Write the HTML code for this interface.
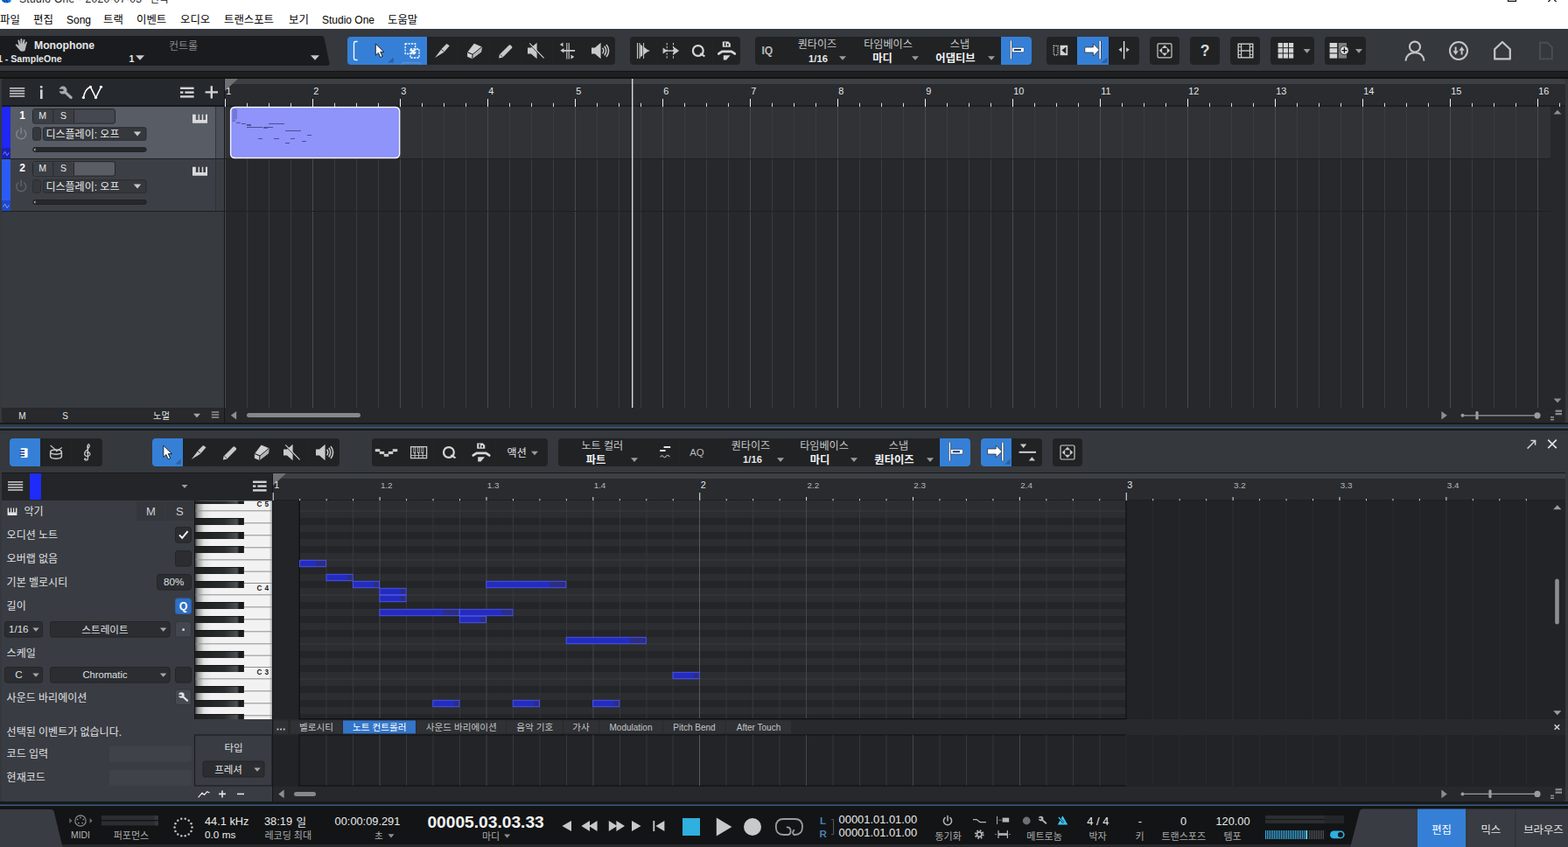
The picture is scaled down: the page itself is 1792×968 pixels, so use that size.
<!DOCTYPE html>
<html lang="ko"><head><meta charset="utf-8"><title>Studio One</title>
<style>
html,body{margin:0;padding:0;background:#1f2124;}
#app{position:relative;width:1792px;height:968px;overflow:hidden;background:#35383d;font-family:"Liberation Sans",sans-serif;}
#app>div{position:absolute;box-sizing:border-box;}
#app>span{position:absolute;white-space:nowrap;line-height:1;}
#ov{position:absolute;left:0;top:0;}
#ov text{font-family:"Liberation Sans","Noto Sans CJK KR",sans-serif;white-space:pre;}
.sr{position:absolute!important;width:1px;height:1px;overflow:hidden;clip:rect(0 0 0 0);clip-path:inset(50%);white-space:nowrap;font-size:1px;color:transparent;}
</style></head><body>
<div id="app">
<div style="left:0px;top:0px;width:1792px;height:33px;background:#ffffff;"></div>
<div style="left:0px;top:33px;width:1792px;height:48px;background:#35383d;"></div>
<div style="left:0px;top:81px;width:1792px;height:9px;background:#1d1f21;"></div>
<div style="left:0px;top:81px;width:1792px;height:1.2px;background:#131416;"></div>
<div style="left:0px;top:88.4px;width:1792px;height:1.2px;background:#121314;"></div>
<div style="left:2px;top:90px;width:1787px;height:393px;background:#26282b;border-radius:4px;"></div>
<div style="left:2px;top:90px;width:254px;height:31px;background:#25282c;border-radius:4px 0 0 0;"></div>
<div style="left:2px;top:121px;width:254px;height:345px;background:#373a3f;"></div>
<div style="left:257px;top:90px;width:1532px;height:6px;background:#3c3f44;border-radius:0 4px 0 0;"></div>
<div style="left:257px;top:96px;width:1532px;height:25px;background:#292b2f;"></div>
<div style="left:257px;top:120px;width:1532px;height:1.5px;background:#1d1f21;"></div>
<div style="left:2px;top:120px;width:254px;height:1.5px;background:#17191b;"></div>
<div style="left:257px;top:122px;width:1515px;height:59px;background:#303236;"></div>
<div style="left:257px;top:181px;width:1515px;height:1px;background:#1e2022;"></div>
<div style="left:257px;top:241px;width:1515px;height:1px;background:#1e2022;"></div>
<div style="left:256px;top:90px;width:1px;height:393px;background:#141617;"></div>
<div style="left:2px;top:466px;width:254px;height:17px;background:#27292c;border-radius:0 0 0 4px;"></div>
<div style="left:257px;top:466px;width:1532px;height:17px;background:#26282b;border-radius:0 0 4px 0;"></div>
<div style="left:12px;top:122px;width:235px;height:60px;background:#575c65;"></div>
<div style="left:247px;top:122px;width:9px;height:60px;background:#4b4f57;"></div>
<div style="left:246px;top:122px;width:1px;height:60px;background:#33363b;"></div>
<div style="left:2px;top:122px;width:10px;height:47px;background:#1f27f5;"></div>
<div style="left:2px;top:169px;width:10px;height:12px;background:#1a21b4;"></div>
<div style="left:2px;top:181px;width:254px;height:1px;background:#1d1f21;"></div>
<div style="left:12px;top:182px;width:235px;height:60px;background:#3c3f45;"></div>
<div style="left:247px;top:182px;width:9px;height:60px;background:#393c41;"></div>
<div style="left:246px;top:182px;width:1px;height:60px;background:#2d3034;"></div>
<div style="left:2px;top:182px;width:10px;height:47px;background:#2a5cf5;"></div>
<div style="left:2px;top:229px;width:10px;height:12px;background:#1d49c8;"></div>
<div style="left:2px;top:241px;width:254px;height:1px;background:#1d1f21;"></div>
<div style="left:0px;top:483px;width:1792px;height:2px;background:#17191b;"></div>
<div style="left:0px;top:488px;width:1792px;height:1.3px;background:#2f5f94;"></div>
<div style="left:0px;top:490.4px;width:1792px;height:1.6px;background:#17191b;"></div>
<div style="left:2px;top:493px;width:1787px;height:423px;background:#212326;border-radius:4px;"></div>
<div style="left:2px;top:493px;width:1787px;height:47px;background:#35383d;border-radius:4px 4px 0 0;"></div>
<div style="left:2px;top:540px;width:1787px;height:1.2px;background:#17191b;"></div>
<div style="left:2px;top:541px;width:309px;height:31px;background:#232528;"></div>
<div style="left:311px;top:541px;width:1px;height:375px;background:#141617;"></div>
<div style="left:312px;top:541px;width:1477px;height:6px;background:#3c3f44;"></div>
<div style="left:312px;top:547px;width:1477px;height:25px;background:#292b2f;"></div>
<div style="left:312px;top:571px;width:1477px;height:1.4px;background:#1d1f21;"></div>
<div style="left:33.8px;top:541px;width:13.4px;height:30px;background:#1f2bfb;"></div>
<div style="left:312px;top:572.4px;width:30.5px;height:249.6px;background:#222427;"></div>
<div style="left:342.5px;top:572.4px;width:943.9px;height:249.6px;background:#2b2d31;"></div>
<div style="left:312px;top:822px;width:1477px;height:18px;background:#27292c;"></div>
<div style="left:222px;top:822px;width:89px;height:94px;background:#393c42;"></div>
<div style="left:312px;top:899px;width:1477px;height:17px;background:#26282b;border-radius:0 0 4px 0;"></div>
<div style="left:2px;top:572px;width:220px;height:344px;background:#393c42;border-radius:0 0 0 4px;"></div>
<div style="left:0px;top:916px;width:1792px;height:3.4px;background:#17191b;"></div>
<div style="left:0px;top:919.6px;width:1792px;height:1.3px;background:#2f5f94;"></div>
<div style="left:0px;top:921px;width:1792px;height:47px;background:#131415;"></div>
<div style="left:0px;top:965.4px;width:1792px;height:2.6px;background:#26282b;"></div>
<svg id="ov" width="1792" height="968" viewBox="0 0 1792 968">
<path d="M2 0 h10.5 v1.2 q-1 2 -5 2.2 q-4 0 -5.5 -2.4z" fill="#1479e0"/>
<path d="M4.5 0 l1 2.6 M7.5 0 l1 2.6" fill="none" stroke="#0a2a5a" stroke-width="1"/>
<text x="171" y="3.3" font-size="12" fill="#222">편곡*</text>
<path d="M1723.5 0 v1.4 h9 v-1.4" fill="none" stroke="#111" stroke-width="1.1"/>
<path d="M1769.4 2 l2.2 -2 M1778.6 2 l-2.2 -2" fill="none" stroke="#111" stroke-width="1.2"/>
<text x="0" y="27" font-size="12.4" fill="#000">파일</text>
<text x="38" y="27" font-size="12.4" fill="#000">편집</text>
<text x="118" y="27" font-size="12.4" fill="#000">트랙</text>
<text x="156" y="27" font-size="12.4" fill="#000">이벤트</text>
<text x="206" y="27" font-size="12.4" fill="#000">오디오</text>
<text x="256" y="27" font-size="12.4" fill="#000">트랜스포트</text>
<text x="330" y="27" font-size="12.4" fill="#000">보기</text>
<text x="443" y="27" font-size="12.4" fill="#000">도움말</text>
<path d="M0 41 H367 q3 0 3.6 3 L376.5 72 q0.5 3 -2.5 3 H0z" fill="#191b1e"/>
<path d="M23 58 c-1.5 -2 -4 -5 -5 -6 c-0.8 -1 0.6 -2 1.6 -1.2 l2 1.8 l-1.2 -6 c-0.2 -1.3 1.4 -1.6 1.8 -0.4 l1.2 4.2 l0 -5.4 c0 -1.3 1.8 -1.3 1.9 0 l0.3 5.2 l1.1 -4.6 c0.3 -1.2 2 -0.8 1.8 0.4 l-0.8 5 l1.6 -2.8 c0.6 -1 2 -0.3 1.6 0.8 c-1 2.6 -1.6 5.4 -2.4 9 c-2 1 -4 1 -5.5 0z" fill="#b9babb"/>
<path d="M155 63.25 h10 l-5 5.5 z" fill="#c8c9ca"/>
<text x="193" y="57" font-size="12" fill="#84878b">컨트롤</text>
<path d="M355 63.25 h10 l-5 5.5 z" fill="#c8c9ca"/>
<rect x="397" y="42" width="306" height="32" fill="#202224" rx="4"/>
<path d="M401 42 H488 V74 H401 q-4 0 -4 -4 V46 q0 -4 4 -4z" fill="#3580d6"/>
<line x1="523.5" y1="42" x2="523.5" y2="74" stroke="#222426" stroke-width="1"/>
<line x1="559.5" y1="42" x2="559.5" y2="74" stroke="#222426" stroke-width="1"/>
<line x1="595.5" y1="42" x2="595.5" y2="74" stroke="#222426" stroke-width="1"/>
<line x1="631.5" y1="42" x2="631.5" y2="74" stroke="#222426" stroke-width="1"/>
<line x1="667.5" y1="42" x2="667.5" y2="74" stroke="#222426" stroke-width="1"/>
<path d="M408.5 47.5 h-2.3 q-1.7 0 -1.7 1.7 v17.6 q0 1.7 1.7 1.7 h2.3" fill="none" stroke="#fff" stroke-width="1.3"/>
<path d="M429.3 50 L429.3 63.2 L432.4 60.4 L434.8 65.6 L437.2 64.5 L434.8 59.4 L438.9 59.4z" fill="#fff" stroke="#111" stroke-width="0.9" stroke-linejoin="round"/>
<path d="M449.8 65.5 V71.6 H443.2z" fill="#2a5fa6"/>
<rect x="463.2" y="50" width="11.5" height="11.5" fill="none" stroke="#fff" stroke-width="1.3" stroke-dasharray="2.2 1.2"/>
<rect x="469" y="56" width="10" height="10" fill="none" stroke="#fff" stroke-width="1.3" stroke-dasharray="2.2 1.2"/>
<path d="M469.5 56.5 l5 5 m0 -5 l-5 5" fill="none" stroke="#fff" stroke-width="1.8"/>
<path d="M459.5 74 v-0.6 q0 -1.6 1.6 -1.6 h18 q1.6 0 1.6 1.6 v0.6" fill="#3f7fd0" stroke="#6d9fe0" stroke-width="0.8"/>
<path d="M497 66 L505 55.5 L510.5 50 L513.8 52.2 L507.3 59.8 z" fill="#c8c9ca"/>
<line x1="504.3" y1="56.4" x2="507.7" y2="59.2" stroke="#202224" stroke-width="0.9"/>
<path d="M541.9 50.2 L550.4 53.8 L549.8 59.2 L539.8 66.8 L534.4 64.6 L534.6 59.8z" fill="#d0d1d2" stroke="#d0d1d2" stroke-width="0.8" stroke-linejoin="round"/>
<path d="M534.6 59.8 L540.2 62.2 L539.8 66.8 M540.2 62.2 L550.4 53.8" fill="none" stroke="#202224" stroke-width="0.9"/>
<path d="M540.2 62.2 L550.4 53.8 L549.8 59.2 L539.8 66.8z" fill="#b4b5b6"/>
<path d="M534.6 59.8 L540.2 62.2 L539.8 66.8 M540.2 62.2 L550.4 53.8" fill="none" stroke="#202224" stroke-width="0.8"/>
<path d="M570 66.5 l1 -4.2 l10.6 -10.6 q1 -0.9 2 0 l1.4 1.4 q0.9 1 0 2 l-10.6 10.6 z" fill="#c8c9ca"/>
<line x1="571.6" y1="62.3" x2="574.6" y2="65.1" stroke="#202224" stroke-width="0.8"/>
<path d="M603 54.6 h4 l6.6 -5.8 v18.4 l-6.6 -5.8 h-4z" fill="#c8c9ca"/>
<line x1="605.2" y1="49.5" x2="621.5" y2="66.5" stroke="#c8c9ca" stroke-width="1.2"/>
<line x1="604.6" y1="50.2" x2="620.9" y2="67.2" stroke="#202224" stroke-width="0.8"/>
<line x1="647.8" y1="49" x2="647.8" y2="67.5" stroke="#c8c9ca" stroke-width="1.1"/>
<line x1="650.2" y1="49" x2="650.2" y2="67.5" stroke="#c8c9ca" stroke-width="1.1"/>

<path d="M643.5 48.6 l-3.6 2.3 l3.6 2.3z" fill="#c8c9ca"/>
<path d="M640.3 57.8 l4.2 -2.7 v1.9 h12.6 v1.7 h-12.6 v1.9z" fill="#c8c9ca"/>
<path d="M652.5 62.6 l3.8 2.4 l-3.8 2.4z" fill="#c8c9ca"/>
<path d="M676 54.6 h4 l6.6 -5.8 v18.4 l-6.6 -5.8 h-4z" fill="#c8c9ca"/>
<path d="M688.6 54.8 q2.4 3.2 0 6.4 M690.8 52.8 q3.8 5.2 0 10.4 M693 51 q5.2 7 0 14" fill="none" stroke="#c8c9ca" stroke-width="1.5"/>
<rect x="720" y="42" width="126" height="32" fill="#202224" rx="4"/>
<line x1="751.5" y1="42" x2="751.5" y2="74" stroke="#222426" stroke-width="1"/>
<line x1="783" y1="42" x2="783" y2="74" stroke="#222426" stroke-width="1"/>
<line x1="814.5" y1="42" x2="814.5" y2="74" stroke="#222426" stroke-width="1"/>
<line x1="728.5" y1="49" x2="728.5" y2="67" stroke="#c8c9ca" stroke-width="1.1"/>
<line x1="731" y1="49" x2="731" y2="67" stroke="#c8c9ca" stroke-width="1.1"/>
<path d="M731.6 50.6 L741.5 58 L731.6 65.4z" fill="#c8c9ca"/>
<line x1="734.8" y1="49" x2="734.8" y2="67" stroke="#202224" stroke-width="0.9"/>
<line x1="735.6" y1="49" x2="735.6" y2="67" stroke="#c8c9ca" stroke-width="1"/>
<path d="M735.2 58 h7" fill="none" stroke="#c8c9ca" stroke-width="1.2"/>
<line x1="762.2" y1="49" x2="762.2" y2="67" stroke="#c8c9ca" stroke-width="1" stroke-dasharray="2.4 1.4"/>
<line x1="769.5" y1="49" x2="769.5" y2="67" stroke="#c8c9ca" stroke-width="1" stroke-dasharray="2.4 1.4"/>
<path d="M757.6 54.6 l5 3.4 l-5 3.4z" fill="#c8c9ca"/>
<path d="M759 58 h12" fill="none" stroke="#c8c9ca" stroke-width="1.4"/>
<path d="M769.8 53.4 l6.4 4.6 l-6.4 4.6z" fill="#c8c9ca"/>
<circle cx="797.8" cy="58" r="5.9" fill="none" stroke="#d6d7d8" stroke-width="2.2"/>
<path d="M800.2 61.2 l5.2 3.2" fill="none" stroke="#d6d7d8" stroke-width="2"/>
<path d="M825.8 47.4 h6.6 l2.5 2.5 v3.8 h-9.1z" fill="#d6d7d8"/>
<rect x="827.9" y="48.5" width="1.5" height="4" fill="#202224"/>
<rect x="831" y="50" width="1.6" height="2.5" fill="#202224"/>
<path d="M821.4 61.4 L825.2 58.8 H836 L839.8 61.4" fill="none" stroke="#d6d7d8" stroke-width="2.8" stroke-linejoin="round" stroke-linecap="round"/>
<path d="M826.8 63.3 h7.8 l-4.5 5.2 h-3.3z" fill="#d6d7d8"/>
<rect x="863" y="42" width="316" height="32" fill="#202224" rx="4"/>
<text x="911.74" y="55.3" font-size="12.1" fill="#c6c7c9">퀀타이즈</text>
<path d="M959 64.2 h8 l-4 4.6 z" fill="#9a9c9f"/>
<text x="987.17" y="55.3" font-size="12.1" fill="#c6c7c9">타임베이스</text>
<text x="997.18" y="71.3" font-size="12.3" font-weight="bold" fill="#f4f4f5">마디</text>
<path d="M1042 64.2 h8 l-4 4.6 z" fill="#9a9c9f"/>
<text x="1085.87" y="55.3" font-size="12.1" fill="#c6c7c9">스냅</text>
<text x="1069.37" y="71.3" font-size="12.3" font-weight="bold" fill="#f4f4f5">어댑티브</text>
<path d="M1129 64.2 h8 l-4 4.6 z" fill="#9a9c9f"/>
<path d="M1144 42 h31 q4 0 4 4 v24 q0 4 -4 4 h-31z" fill="#3580d6"/>
<line x1="1155.4" y1="46.4" x2="1155.4" y2="67.4" stroke="#1d2f55" stroke-width="2.6"/>
<line x1="1155.4" y1="46.4" x2="1155.4" y2="67.4" stroke="#fff" stroke-width="1.5"/>
<rect x="1156.4" y="54.2" width="14" height="5.6" rx="1.2" fill="#fff" stroke="#1d2f55" stroke-width="0.6"/>
<rect x="1158.8" y="56" width="8.2" height="2" fill="#173a86"/>
<rect x="1196" y="42" width="106" height="32" fill="#202224" rx="4"/>
<rect x="1231" y="42" width="36" height="32" fill="#3580d6"/>
<rect x="1204.2" y="52.4" width="4.8" height="10.4" fill="none" stroke="#e0e1e2" stroke-width="1.2" stroke-dasharray="1.2 1.1"/>
<rect x="1211.6" y="51.8" width="8.6" height="11.4" fill="#d2d3d4"/>
<path d="M1218.4 53.6 v7.8 l-5 -3.9z" fill="#202224"/>
<path d="M1239.8 54 h9.6 v-4 l7 7 l-7 7 v-4 h-9.6z" fill="#fff" stroke="#1d1f21" stroke-width="0.7"/>
<line x1="1257.2" y1="46.8" x2="1257.2" y2="67.4" stroke="#1d1f21" stroke-width="2.8"/>
<line x1="1257.2" y1="46.8" x2="1257.2" y2="67.4" stroke="#fff" stroke-width="1.7"/>
<path d="M1265.4 65.4 v6.6 h-6.8z" fill="#2a5fa6"/>
<line x1="1284.6" y1="47" x2="1284.6" y2="67.4" stroke="#e6e7e8" stroke-width="1.4"/>
<path d="M1282 54.2 v5.2 l-3.6 -2.6z M1287.2 54.2 v5.2 l3.6 -2.6z" fill="#c8c9ca"/>
<rect x="1314" y="42" width="34" height="32" fill="#202224" rx="4"/>
<rect x="1323" y="49.8" width="16" height="16" rx="1.4" fill="none" stroke="#c8c9ca" stroke-width="1.2"/>
<path d="M1327.8 55 l3.2 -3.4 l3.2 3.4z M1327.8 60.6 l3.2 3.4 l3.2 -3.4z M1328.2 54.6 l-3.4 3.2 l3.4 3.2z M1333.8 54.6 l3.4 3.2 l-3.4 3.2z" fill="#c8c9ca"/>
<rect x="1360" y="42" width="34" height="32" fill="#202224" rx="4"/>
<rect x="1406" y="42" width="34" height="32" fill="#202224" rx="4"/>
<rect x="1415.2" y="50.2" width="16.6" height="15.6" fill="none" stroke="#c8c9ca" stroke-width="1.4"/>
<line x1="1418.6" y1="50" x2="1418.6" y2="66" stroke="#c8c9ca" stroke-width="1.2"/>
<line x1="1428.4" y1="50" x2="1428.4" y2="66" stroke="#c8c9ca" stroke-width="1.2"/>
<line x1="1418.6" y1="58" x2="1428.4" y2="58" stroke="#c8c9ca" stroke-width="1.4"/>
<line x1="1415" y1="53.6" x2="1418.6" y2="53.6" stroke="#c8c9ca" stroke-width="1"/>
<line x1="1428.4" y1="53.6" x2="1432" y2="53.6" stroke="#c8c9ca" stroke-width="1"/>
<line x1="1415" y1="58" x2="1418.6" y2="58" stroke="#c8c9ca" stroke-width="1"/>
<line x1="1428.4" y1="58" x2="1432" y2="58" stroke="#c8c9ca" stroke-width="1"/>
<line x1="1415" y1="62.4" x2="1418.6" y2="62.4" stroke="#c8c9ca" stroke-width="1"/>
<line x1="1428.4" y1="62.4" x2="1432" y2="62.4" stroke="#c8c9ca" stroke-width="1"/>
<rect x="1452" y="42" width="50" height="32" fill="#202224" rx="4"/>
<rect x="1460.6" y="49" width="5.2" height="5.2" fill="#d4d5d6"/>
<rect x="1460.6" y="55.2" width="5.2" height="5.2" fill="#d4d5d6"/>
<rect x="1460.6" y="61.4" width="5.2" height="5.2" fill="#d4d5d6"/>
<rect x="1466.8" y="49" width="5.2" height="5.2" fill="#d4d5d6"/>
<rect x="1466.8" y="55.2" width="5.2" height="5.2" fill="#d4d5d6"/>
<rect x="1466.8" y="61.4" width="5.2" height="5.2" fill="#d4d5d6"/>
<rect x="1473" y="49" width="5.2" height="5.2" fill="#d4d5d6"/>
<rect x="1473" y="55.2" width="5.2" height="5.2" fill="#d4d5d6"/>
<rect x="1473" y="61.4" width="5.2" height="5.2" fill="#d4d5d6"/>
<path d="M1489.6 56.1 h8 l-4 4.6 z" fill="#9a9c9f"/>
<rect x="1514" y="42" width="47" height="32" fill="#202224" rx="4"/>
<rect x="1519.6" y="49" width="8.6" height="5.2" fill="#d4d5d6"/>
<rect x="1519.6" y="55.2" width="8.6" height="5.2" fill="#d4d5d6"/>
<rect x="1519.6" y="61.4" width="8.6" height="5.2" fill="#d4d5d6"/>
<rect x="1529.8" y="49" width="9.2" height="17.6" fill="#7c7e80"/>
<circle cx="1536.4" cy="57.6" r="4.9" fill="#e2e3e3" stroke="#202224" stroke-width="0.9"/>
<path d="M1533.4 57.6 h6 M1536.4 54.6 v6" fill="none" stroke="#111" stroke-width="1.3"/>
<path d="M1549 56.1 h8 l-4 4.6 z" fill="#9a9c9f"/>
<circle cx="1617" cy="53.6" r="6" fill="none" stroke="#c4c5c6" stroke-width="2.1"/>
<path d="M1606.6 68.8 q1.4 -8.6 10.4 -8.6 q9 0 10.4 8.6" fill="none" stroke="#c4c5c6" stroke-width="2.1" stroke-linecap="round"/>
<circle cx="1667" cy="58" r="10" fill="none" stroke="#c4c5c6" stroke-width="2"/>
<path d="M1663.6 53.6 v5.6 M1670.6 62.4 v-5.6" fill="none" stroke="#c4c5c6" stroke-width="2"/>
<path d="M1660.4 58.2 h6.4 l-3.2 4.6z M1667.4 57.8 h6.4 l-3.2 -4.6z" fill="#c4c5c6"/>
<path d="M1708.2 67.4 v-11.2 l8.8 -8.2 l8.8 8.2 v11.2z" fill="none" stroke="#c4c5c6" stroke-width="2.2" stroke-linejoin="round"/>
<path d="M1760 48.8 h8.6 l5.2 5.2 v13.4 h-13.8z" fill="none" stroke="#4b4e53" stroke-width="1.9" stroke-linejoin="round"/>
<path d="M257 90 h15 l-15 14z" fill="#6d7075"/>
<rect x="257" y="122" width="1" height="344" fill="#484a4e"/>
<rect x="257" y="113" width="1" height="9" fill="#ecedee"/>
<rect x="282" y="122" width="1" height="344" fill="#393b3f"/>
<rect x="282" y="117.8" width="1" height="4.2" fill="#d8d9da"/>
<rect x="307" y="122" width="1" height="344" fill="#393b3f"/>
<rect x="307" y="117.8" width="1" height="4.2" fill="#d8d9da"/>
<rect x="332" y="122" width="1" height="344" fill="#393b3f"/>
<rect x="332" y="117.8" width="1" height="4.2" fill="#d8d9da"/>
<rect x="357" y="122" width="1" height="344" fill="#484a4e"/>
<rect x="357" y="113" width="1" height="9" fill="#ecedee"/>
<rect x="382" y="122" width="1" height="344" fill="#393b3f"/>
<rect x="382" y="117.8" width="1" height="4.2" fill="#d8d9da"/>
<rect x="407" y="122" width="1" height="344" fill="#393b3f"/>
<rect x="407" y="117.8" width="1" height="4.2" fill="#d8d9da"/>
<rect x="432" y="122" width="1" height="344" fill="#393b3f"/>
<rect x="432" y="117.8" width="1" height="4.2" fill="#d8d9da"/>
<rect x="457" y="122" width="1" height="344" fill="#484a4e"/>
<rect x="457" y="113" width="1" height="9" fill="#ecedee"/>
<rect x="482" y="122" width="1" height="344" fill="#393b3f"/>
<rect x="482" y="117.8" width="1" height="4.2" fill="#d8d9da"/>
<rect x="507" y="122" width="1" height="344" fill="#393b3f"/>
<rect x="507" y="117.8" width="1" height="4.2" fill="#d8d9da"/>
<rect x="532" y="122" width="1" height="344" fill="#393b3f"/>
<rect x="532" y="117.8" width="1" height="4.2" fill="#d8d9da"/>
<rect x="557" y="122" width="1" height="344" fill="#484a4e"/>
<rect x="557" y="113" width="1" height="9" fill="#ecedee"/>
<rect x="582" y="122" width="1" height="344" fill="#393b3f"/>
<rect x="582" y="117.8" width="1" height="4.2" fill="#d8d9da"/>
<rect x="607" y="122" width="1" height="344" fill="#393b3f"/>
<rect x="607" y="117.8" width="1" height="4.2" fill="#d8d9da"/>
<rect x="632" y="122" width="1" height="344" fill="#393b3f"/>
<rect x="632" y="117.8" width="1" height="4.2" fill="#d8d9da"/>
<rect x="657" y="122" width="1" height="344" fill="#484a4e"/>
<rect x="657" y="113" width="1" height="9" fill="#ecedee"/>
<rect x="682" y="122" width="1" height="344" fill="#393b3f"/>
<rect x="682" y="117.8" width="1" height="4.2" fill="#d8d9da"/>
<rect x="707" y="122" width="1" height="344" fill="#393b3f"/>
<rect x="707" y="117.8" width="1" height="4.2" fill="#d8d9da"/>
<rect x="732" y="122" width="1" height="344" fill="#393b3f"/>
<rect x="732" y="117.8" width="1" height="4.2" fill="#d8d9da"/>
<rect x="757" y="122" width="1" height="344" fill="#484a4e"/>
<rect x="757" y="113" width="1" height="9" fill="#ecedee"/>
<rect x="782" y="122" width="1" height="344" fill="#393b3f"/>
<rect x="782" y="117.8" width="1" height="4.2" fill="#d8d9da"/>
<rect x="807" y="122" width="1" height="344" fill="#393b3f"/>
<rect x="807" y="117.8" width="1" height="4.2" fill="#d8d9da"/>
<rect x="832" y="122" width="1" height="344" fill="#393b3f"/>
<rect x="832" y="117.8" width="1" height="4.2" fill="#d8d9da"/>
<rect x="857" y="122" width="1" height="344" fill="#484a4e"/>
<rect x="857" y="113" width="1" height="9" fill="#ecedee"/>
<rect x="882" y="122" width="1" height="344" fill="#393b3f"/>
<rect x="882" y="117.8" width="1" height="4.2" fill="#d8d9da"/>
<rect x="907" y="122" width="1" height="344" fill="#393b3f"/>
<rect x="907" y="117.8" width="1" height="4.2" fill="#d8d9da"/>
<rect x="932" y="122" width="1" height="344" fill="#393b3f"/>
<rect x="932" y="117.8" width="1" height="4.2" fill="#d8d9da"/>
<rect x="957" y="122" width="1" height="344" fill="#484a4e"/>
<rect x="957" y="113" width="1" height="9" fill="#ecedee"/>
<rect x="982" y="122" width="1" height="344" fill="#393b3f"/>
<rect x="982" y="117.8" width="1" height="4.2" fill="#d8d9da"/>
<rect x="1007" y="122" width="1" height="344" fill="#393b3f"/>
<rect x="1007" y="117.8" width="1" height="4.2" fill="#d8d9da"/>
<rect x="1032" y="122" width="1" height="344" fill="#393b3f"/>
<rect x="1032" y="117.8" width="1" height="4.2" fill="#d8d9da"/>
<rect x="1057" y="122" width="1" height="344" fill="#484a4e"/>
<rect x="1057" y="113" width="1" height="9" fill="#ecedee"/>
<rect x="1082" y="122" width="1" height="344" fill="#393b3f"/>
<rect x="1082" y="117.8" width="1" height="4.2" fill="#d8d9da"/>
<rect x="1107" y="122" width="1" height="344" fill="#393b3f"/>
<rect x="1107" y="117.8" width="1" height="4.2" fill="#d8d9da"/>
<rect x="1132" y="122" width="1" height="344" fill="#393b3f"/>
<rect x="1132" y="117.8" width="1" height="4.2" fill="#d8d9da"/>
<rect x="1157" y="122" width="1" height="344" fill="#484a4e"/>
<rect x="1157" y="113" width="1" height="9" fill="#ecedee"/>
<rect x="1182" y="122" width="1" height="344" fill="#393b3f"/>
<rect x="1182" y="117.8" width="1" height="4.2" fill="#d8d9da"/>
<rect x="1207" y="122" width="1" height="344" fill="#393b3f"/>
<rect x="1207" y="117.8" width="1" height="4.2" fill="#d8d9da"/>
<rect x="1232" y="122" width="1" height="344" fill="#393b3f"/>
<rect x="1232" y="117.8" width="1" height="4.2" fill="#d8d9da"/>
<rect x="1257" y="122" width="1" height="344" fill="#484a4e"/>
<rect x="1257" y="113" width="1" height="9" fill="#ecedee"/>
<rect x="1282" y="122" width="1" height="344" fill="#393b3f"/>
<rect x="1282" y="117.8" width="1" height="4.2" fill="#d8d9da"/>
<rect x="1307" y="122" width="1" height="344" fill="#393b3f"/>
<rect x="1307" y="117.8" width="1" height="4.2" fill="#d8d9da"/>
<rect x="1332" y="122" width="1" height="344" fill="#393b3f"/>
<rect x="1332" y="117.8" width="1" height="4.2" fill="#d8d9da"/>
<rect x="1357" y="122" width="1" height="344" fill="#484a4e"/>
<rect x="1357" y="113" width="1" height="9" fill="#ecedee"/>
<rect x="1382" y="122" width="1" height="344" fill="#393b3f"/>
<rect x="1382" y="117.8" width="1" height="4.2" fill="#d8d9da"/>
<rect x="1407" y="122" width="1" height="344" fill="#393b3f"/>
<rect x="1407" y="117.8" width="1" height="4.2" fill="#d8d9da"/>
<rect x="1432" y="122" width="1" height="344" fill="#393b3f"/>
<rect x="1432" y="117.8" width="1" height="4.2" fill="#d8d9da"/>
<rect x="1457" y="122" width="1" height="344" fill="#484a4e"/>
<rect x="1457" y="113" width="1" height="9" fill="#ecedee"/>
<rect x="1482" y="122" width="1" height="344" fill="#393b3f"/>
<rect x="1482" y="117.8" width="1" height="4.2" fill="#d8d9da"/>
<rect x="1507" y="122" width="1" height="344" fill="#393b3f"/>
<rect x="1507" y="117.8" width="1" height="4.2" fill="#d8d9da"/>
<rect x="1532" y="122" width="1" height="344" fill="#393b3f"/>
<rect x="1532" y="117.8" width="1" height="4.2" fill="#d8d9da"/>
<rect x="1557" y="122" width="1" height="344" fill="#484a4e"/>
<rect x="1557" y="113" width="1" height="9" fill="#ecedee"/>
<rect x="1582" y="122" width="1" height="344" fill="#393b3f"/>
<rect x="1582" y="117.8" width="1" height="4.2" fill="#d8d9da"/>
<rect x="1607" y="122" width="1" height="344" fill="#393b3f"/>
<rect x="1607" y="117.8" width="1" height="4.2" fill="#d8d9da"/>
<rect x="1632" y="122" width="1" height="344" fill="#393b3f"/>
<rect x="1632" y="117.8" width="1" height="4.2" fill="#d8d9da"/>
<rect x="1657" y="122" width="1" height="344" fill="#484a4e"/>
<rect x="1657" y="113" width="1" height="9" fill="#ecedee"/>
<rect x="1682" y="122" width="1" height="344" fill="#393b3f"/>
<rect x="1682" y="117.8" width="1" height="4.2" fill="#d8d9da"/>
<rect x="1707" y="122" width="1" height="344" fill="#393b3f"/>
<rect x="1707" y="117.8" width="1" height="4.2" fill="#d8d9da"/>
<rect x="1732" y="122" width="1" height="344" fill="#393b3f"/>
<rect x="1732" y="117.8" width="1" height="4.2" fill="#d8d9da"/>
<rect x="1757" y="122" width="1" height="344" fill="#484a4e"/>
<rect x="1757" y="113" width="1" height="9" fill="#ecedee"/>
<rect x="1782" y="117.8" width="1" height="4.2" fill="#d8d9da"/>
<rect x="257" y="181" width="1515" height="1" fill="#1e2022"/>
<rect x="257" y="241" width="1515" height="1" fill="#1e2022"/>
<rect x="722" y="90" width="1.4" height="376" fill="#d8d9da"/>
<rect x="1772" y="122" width="17" height="344" fill="#26282b"/>
<path d="M1775.6 130.6 l4.4 -4.8 l4.4 4.8z" fill="#8c8e91"/>
<path d="M1775.6 455.4 l4.4 4.8 l4.4 -4.8z" fill="#8c8e91"/>
<rect x="263.7" y="122.6" width="192.8" height="57.8" rx="4.4" fill="#8f94fb" stroke="#f2f3ff" stroke-width="1.6"/>
<rect x="265.1" y="124" width="190" height="55" rx="3.2" fill="none" stroke="#8389f0" stroke-width="0.8"/>
<path d="M265.4 126 q0 -1.8 1.8 -1.8 h2.6 q1.2 0 1.2 1.2 v9.4 q0 2 -2 2 h-3.6z" fill="#7277d8"/>
<rect x="265.4" y="137.6" width="3.4" height="1" fill="#4a4d96"/>
<rect x="270" y="139.8" width="4.8" height="1" fill="#4a4d96"/>
<rect x="276" y="141" width="5" height="1" fill="#4a4d96"/>
<rect x="282" y="142" width="5" height="1.8" fill="#4a4d96"/>
<rect x="282" y="145" width="18" height="1" fill="#4a4d96"/>
<rect x="301" y="145" width="5" height="1.8" fill="#4a4d96"/>
<rect x="306" y="145" width="6" height="1" fill="#4a4d96"/>
<rect x="307" y="141" width="18" height="1" fill="#4a4d96"/>
<rect x="326" y="149" width="18" height="1" fill="#4a4d96"/>
<rect x="351" y="154" width="5" height="1" fill="#4a4d96"/>
<rect x="295" y="158" width="5" height="1" fill="#4a4d96"/>
<rect x="313" y="158" width="6" height="1" fill="#4a4d96"/>
<rect x="332" y="158" width="5" height="1" fill="#4a4d96"/>
<rect x="326" y="163" width="5" height="1" fill="#4a4d96"/>
<rect x="345" y="161" width="5" height="1" fill="#4a4d96"/>
<path d="M3.6 176.6 l2 -3.4 l2.6 4.6 l2 -3.4" fill="none" stroke="#7d86ff" stroke-width="0.9"/>
<rect x="37.5" y="124.7" width="94" height="16.4" rx="2.4" fill="#45484f" stroke="#232528" stroke-width="1"/>
<rect x="38" y="125.2" width="46" height="15.4" fill="#3b3e44" rx="2"/>
<rect x="60.3" y="125.2" width="1" height="15.4" fill="#26282b"/>
<rect x="84" y="125.2" width="1" height="15.4" fill="#26282b"/>
<path d="M220 130.8 v10 h17 v-10 h-2 v6.2 h-2.8 v-6.2 h-1.4 v6.2 h-2.8 v-6.2 h-1.4 v6.2 h-2.8 v-6.2z" fill="#d9dadb"/>
<path d="M20.7 149 a5.5 5.5 0 1 0 7 0" fill="none" stroke="#7d828b" stroke-width="1.6" stroke-linecap="round"/>
<line x1="24.2" y1="146.4" x2="24.2" y2="152.4" stroke="#7d828b" stroke-width="1.6" stroke-linecap="round"/>
<rect x="37.5" y="145.7" width="9" height="14.6" rx="2" fill="#35383d" stroke="#2b2d31" stroke-width="1"/>
<rect x="49.5" y="145.7" width="117.5" height="14.6" rx="2" fill="#35383d" stroke="#2b2d31" stroke-width="1"/>
<text x="52.5" y="157.8" font-size="12" fill="#e9eaeb">디스플레이: 오프</text>
<path d="M152.8 150.6 h8.4 l-4.2 4.8 z" fill="#c8c9ca"/>
<rect x="37.6" y="168.6" width="129.6" height="4.8" rx="2.4" fill="#26282b" stroke="#1a1b1d" stroke-width="0.8"/>
<path d="M40.4 169.2 v3.6 l-1.9 -1.8z" fill="#c0c1c3"/>
<path d="M3.6 236.6 l2 -3.4 l2.6 4.6 l2 -3.4" fill="none" stroke="#88a4ff" stroke-width="0.9"/>
<rect x="37.5" y="184.7" width="94" height="16.4" rx="2.4" fill="#5a5d63" stroke="#232528" stroke-width="1"/>
<rect x="38" y="185.2" width="46" height="15.4" fill="#3b3e44" rx="2"/>
<rect x="60.3" y="185.2" width="1" height="15.4" fill="#26282b"/>
<rect x="84" y="185.2" width="1" height="15.4" fill="#26282b"/>
<path d="M220 190.8 v10 h17 v-10 h-2 v6.2 h-2.8 v-6.2 h-1.4 v6.2 h-2.8 v-6.2 h-1.4 v6.2 h-2.8 v-6.2z" fill="#d9dadb"/>
<path d="M20.7 209 a5.5 5.5 0 1 0 7 0" fill="none" stroke="#5d6066" stroke-width="1.6" stroke-linecap="round"/>
<line x1="24.2" y1="206.4" x2="24.2" y2="212.4" stroke="#5d6066" stroke-width="1.6" stroke-linecap="round"/>
<rect x="37.5" y="205.7" width="9" height="14.6" rx="2" fill="#35383d" stroke="#2b2d31" stroke-width="1"/>
<rect x="49.5" y="205.7" width="117.5" height="14.6" rx="2" fill="#35383d" stroke="#2b2d31" stroke-width="1"/>
<text x="52.5" y="217.8" font-size="12" fill="#e9eaeb">디스플레이: 오프</text>
<path d="M152.8 210.6 h8.4 l-4.2 4.8 z" fill="#c8c9ca"/>
<rect x="37.6" y="228.6" width="129.6" height="4.8" rx="2.4" fill="#26282b" stroke="#1a1b1d" stroke-width="0.8"/>
<path d="M40.4 229.2 v3.6 l-1.9 -1.8z" fill="#c0c1c3"/>
<rect x="11" y="100" width="17.2" height="1.7" fill="#b9babb"/>
<rect x="11" y="103.05" width="17.2" height="1.7" fill="#b9babb"/>
<rect x="11" y="106.1" width="17.2" height="1.7" fill="#b9babb"/>
<rect x="11" y="109.15" width="17.2" height="1.7" fill="#b9babb"/>
<rect x="45.8" y="98" width="2.8" height="2.8" fill="#d2d3d4" rx="1.2"/>
<rect x="46" y="102.4" width="2.6" height="10.6" fill="#d2d3d4"/>
<g transform="translate(72,103.1) scale(1)">
<path d="M1.6 1.6 L9.2 8.4" fill="none" stroke="#a9abad" stroke-width="3.1" stroke-linecap="round"/>
<circle cx="0" cy="0" r="4.5" fill="#a9abad"/>
<rect x="-5" y="-1.25" width="5.6" height="2.5" fill="#25282c" rx="1"/>
</g>
<path d="M95.4 111.5 q1.6 -9.6 8 -12.2 l6.1 12.2 l6 -12.2" fill="none" stroke="#fff" stroke-width="1.5"/>
<circle cx="95.4" cy="111.5" r="1.6" fill="#fff"/>
<circle cx="103.4" cy="99.3" r="1.6" fill="#fff"/>
<circle cx="109.5" cy="111.5" r="1.6" fill="#fff"/>
<circle cx="115.5" cy="99.3" r="1.6" fill="#fff"/>
<rect x="206" y="99.6" width="15.6" height="2.4" fill="#d2d3d4"/>
<rect x="206" y="104.4" width="3.4" height="2.4" fill="#d2d3d4"/>
<rect x="211.4" y="104.4" width="10.2" height="2.4" fill="#d2d3d4"/>
<rect x="206" y="109.2" width="15.6" height="2.4" fill="#d2d3d4"/>
<path d="M234.6 105.4 h14.4 M241.8 98.2 v14.4" fill="none" stroke="#d2d3d4" stroke-width="2.4"/>
<rect x="50.5" y="467" width="1" height="15" fill="#2b2d30"/>
<rect x="99.5" y="467" width="1" height="15" fill="#2b2d30"/>
<text x="175" y="479" font-size="10.4" fill="#dfe0e1">노멀</text>
<path d="M221 472.7 h8 l-4 4.6 z" fill="#a6a8ab"/>
<rect x="241.8" y="470" width="8.4" height="2" fill="#77797d"/>
<rect x="241.8" y="473" width="8.4" height="2" fill="#77797d"/>
<rect x="241.8" y="476" width="8.4" height="2" fill="#77797d"/>
<path d="M270.2 470 v9.6 l-6.4 -4.8z" fill="#8c8e91"/>
<rect x="282" y="472" width="130" height="5" fill="#85888b" rx="2.5"/>
<path d="M1647.4 470 v9.6 l6.4 -4.8z" fill="#8c8e91"/>
<line x1="1672" y1="474.8" x2="1756" y2="474.8" stroke="#9a9c9f" stroke-width="1.2"/>
<circle cx="1671.5" cy="474.8" r="2" fill="#9a9c9f"/>
<circle cx="1757" cy="474.8" r="3.6" fill="#9a9c9f"/>
<rect x="1686.4" y="470" width="3.2" height="9.6" fill="#9a9c9f" rx="1.4"/>
<rect x="1777.6" y="468.6" width="7.4" height="2.2" fill="#8c8e91"/>
<rect x="1777.6" y="472" width="7.4" height="2.2" fill="#8c8e91"/>
<rect x="1772" y="476" width="4" height="1.6" fill="#8c8e91"/>
<rect x="1772" y="478.8" width="4" height="1.6" fill="#8c8e91"/>
<rect x="11" y="501" width="106" height="32" fill="#202224" rx="4"/>
<path d="M15 501 H46 V533 H15 q-4 0 -4 -4 V505 q0 -4 4 -4z" fill="#3580d6"/>
<line x1="81.5" y1="501" x2="81.5" y2="533" stroke="#222426" stroke-width="1"/>
<rect x="23.6" y="512.2" width="8" height="10.8" fill="#fff" rx="1"/>
<rect x="22.8" y="514" width="5.4" height="1.6" fill="#1b3f8f"/>
<rect x="22.8" y="517" width="5.4" height="1.6" fill="#1b3f8f"/>
<rect x="22.8" y="520" width="5.4" height="1.6" fill="#1b3f8f"/>
<ellipse cx="64" cy="516.6" rx="6.4" ry="2.6" fill="none" stroke="#c8c9ca" stroke-width="1.4"/>
<path d="M57.6 516.6 v5 a6.4 2.6 0 0 0 12.8 0 v-5" fill="none" stroke="#c8c9ca" stroke-width="1.4"/>
<line x1="57.6" y1="509" x2="65" y2="515.4" stroke="#c8c9ca" stroke-width="1.2"/>
<line x1="70.8" y1="511.6" x2="64" y2="516" stroke="#c8c9ca" stroke-width="1.2"/>
<path d="M100.4 508.4 v15.6 q0 2 -2 2 q-1.8 0 -1.4 -1.6 M100.4 513 q3.4 -3.4 1 -5.4 q-1.6 0.6 -1.6 4.4 M100.4 513.6 q-4.6 3 -3.6 6 q1.4 2.6 4.4 1.6 q2.6 -1.4 1.2 -3.6 q-1.4 -1.6 -3 -0.2" fill="none" stroke="#c8c9ca" stroke-width="1.2" stroke-linecap="round"/>
<circle cx="97.4" cy="524.6" r="1.2" fill="#c8c9ca"/>
<rect x="174" y="501" width="214" height="32" fill="#202224" rx="4"/>
<path d="M178 501 H209 V533 H178 q-4 0 -4 -4 V505 q0 -4 4 -4z" fill="#3580d6"/>
<line x1="245.4" y1="501" x2="245.4" y2="533" stroke="#222426" stroke-width="1"/>
<line x1="281.1" y1="501" x2="281.1" y2="533" stroke="#222426" stroke-width="1"/>
<line x1="316.8" y1="501" x2="316.8" y2="533" stroke="#222426" stroke-width="1"/>
<line x1="352.5" y1="501" x2="352.5" y2="533" stroke="#222426" stroke-width="1"/>
<path d="M186.8 509.2 L186.8 522.4 L189.9 519.6 L192.3 524.8 L194.7 523.7 L192.3 518.6 L196.4 518.6z" fill="#fff" stroke="#111" stroke-width="0.9" stroke-linejoin="round"/>
<path d="M206.6 524.6 V530.6 H200.2z" fill="#2a5fa6"/>
<path d="M218.7 525 L226.7 514.5 L232.2 509 L235.5 511.2 L229 518.8 z" fill="#c8c9ca"/>
<line x1="226" y1="515.4" x2="229.4" y2="518.2" stroke="#202224" stroke-width="0.9"/>
<path d="M254.8 525.5 l1 -4.2 l10.6 -10.6 q1 -0.9 2 0 l1.4 1.4 q0.9 1 0 2 l-10.6 10.6 z" fill="#c8c9ca"/>
<line x1="256.4" y1="521.3" x2="259.4" y2="524.1" stroke="#202224" stroke-width="0.8"/>
<path d="M298.7 509 L307.2 512.6 L306.6 518 L296.6 525.6 L291.2 523.4 L291.4 518.6z" fill="#d0d1d2" stroke="#d0d1d2" stroke-width="0.8" stroke-linejoin="round"/>
<path d="M291.4 518.6 L297 521 L296.6 525.6 M297 521 L307.2 512.6" fill="none" stroke="#202224" stroke-width="0.9"/>
<path d="M297 521 L307.2 512.6 L306.6 518 L296.6 525.6z" fill="#b4b5b6"/>
<path d="M291.4 518.6 L297 521 L296.6 525.6 M297 521 L307.2 512.6" fill="none" stroke="#202224" stroke-width="0.8"/>
<path d="M324 513.6 h4 l6.6 -5.8 v18.4 l-6.6 -5.8 h-4z" fill="#c8c9ca"/>
<line x1="326.2" y1="508.5" x2="342.5" y2="525.5" stroke="#c8c9ca" stroke-width="1.2"/>
<line x1="325.6" y1="509.2" x2="341.9" y2="526.2" stroke="#202224" stroke-width="0.8"/>
<path d="M361 513.6 h4 l6.6 -5.8 v18.4 l-6.6 -5.8 h-4z" fill="#c8c9ca"/>
<path d="M373.6 513.8 q2.4 3.2 0 6.4 M375.8 511.8 q3.8 5.2 0 10.4 M378 510 q5.2 7 0 14" fill="none" stroke="#c8c9ca" stroke-width="1.5"/>
<rect x="425" y="501" width="201" height="32" fill="#202224" rx="4"/>
<line x1="460.5" y1="501" x2="460.5" y2="533" stroke="#222426" stroke-width="1"/>
<line x1="495.5" y1="501" x2="495.5" y2="533" stroke="#222426" stroke-width="1"/>
<line x1="530.5" y1="501" x2="530.5" y2="533" stroke="#222426" stroke-width="1"/>
<line x1="566.5" y1="501" x2="566.5" y2="533" stroke="#222426" stroke-width="1"/>
<rect x="428.8" y="513.2" width="5.4" height="2.9" fill="#e2e3e4"/>
<rect x="428.8" y="514.3" width="5.4" height="0.6" fill="#9a9c9f"/>
<rect x="433.8" y="516" width="5.4" height="2.9" fill="#e2e3e4"/>
<rect x="433.8" y="517.1" width="5.4" height="0.6" fill="#9a9c9f"/>
<rect x="438.8" y="518.8" width="5.4" height="2.9" fill="#e2e3e4"/>
<rect x="438.8" y="519.9" width="5.4" height="0.6" fill="#9a9c9f"/>
<rect x="443.8" y="516" width="5.4" height="2.9" fill="#e2e3e4"/>
<rect x="443.8" y="517.1" width="5.4" height="0.6" fill="#9a9c9f"/>
<rect x="448.8" y="513.2" width="5.4" height="2.9" fill="#e2e3e4"/>
<rect x="448.8" y="514.3" width="5.4" height="0.6" fill="#9a9c9f"/>
<rect x="469.6" y="510.6" width="18" height="13" fill="none" stroke="#c8c9ca" stroke-width="1.3"/>
<line x1="474.1" y1="510.6" x2="474.1" y2="523.6" stroke="#c8c9ca" stroke-width="1"/>
<line x1="478.6" y1="510.6" x2="478.6" y2="523.6" stroke="#c8c9ca" stroke-width="1"/>
<line x1="483.1" y1="510.6" x2="483.1" y2="523.6" stroke="#c8c9ca" stroke-width="1"/>
<rect x="472.4" y="510.6" width="2.8" height="7.4" fill="#c8c9ca"/>
<rect x="473.2" y="511.4" width="1.2" height="5.6" fill="#202224"/>
<rect x="476.9" y="510.6" width="2.8" height="7.4" fill="#c8c9ca"/>
<rect x="477.7" y="511.4" width="1.2" height="5.6" fill="#202224"/>
<rect x="481.4" y="510.6" width="2.8" height="7.4" fill="#c8c9ca"/>
<rect x="482.2" y="511.4" width="1.2" height="5.6" fill="#202224"/>
<line x1="469.6" y1="520.6" x2="487.6" y2="520.6" stroke="#c8c9ca" stroke-width="0.9"/>
<circle cx="512.9" cy="517" r="5.9" fill="none" stroke="#d6d7d8" stroke-width="2.2"/>
<path d="M515.3 520.2 l5.2 3.2" fill="none" stroke="#d6d7d8" stroke-width="2"/>
<path d="M545.2 506.4 h6.6 l2.5 2.5 v3.8 h-9.1z" fill="#d6d7d8"/>
<rect x="547.3" y="507.5" width="1.5" height="4" fill="#202224"/>
<rect x="550.4" y="509" width="1.6" height="2.5" fill="#202224"/>
<path d="M540.8 520.4 L544.6 517.8 H555.4 L559.2 520.4" fill="none" stroke="#d6d7d8" stroke-width="2.8" stroke-linejoin="round" stroke-linecap="round"/>
<path d="M546.2 522.3 h7.8 l-4.5 5.2 h-3.3z" fill="#d6d7d8"/>
<text x="579.6" y="522.2" font-size="12" fill="#e2e3e4">액션</text>
<path d="M607 515.7 h8 l-4 4.6 z" fill="#9a9c9f"/>
<rect x="638" y="501" width="471" height="32" fill="#202224" rx="4"/>
<text x="664.38" y="513.6" font-size="12.1" fill="#c6c7c9">노트 컬러</text>
<text x="669.68" y="529.6" font-size="12.3" font-weight="bold" fill="#f4f4f5">파트</text>
<path d="M721 523.3 h8 l-4 4.6 z" fill="#9a9c9f"/>
<line x1="740.5" y1="501" x2="740.5" y2="533" stroke="#222426" stroke-width="1"/>
<line x1="776.5" y1="501" x2="776.5" y2="533" stroke="#222426" stroke-width="1"/>
<rect x="758.6" y="510" width="7.6" height="2" fill="#e2e3e4"/>
<rect x="754.2" y="514" width="6.4" height="2" fill="#e2e3e4"/>
<path d="M754.6 522.4 q1.8 -3 3.6 -0.6 q1.6 2 3.2 -0.4 q1.6 -2.2 3.2 0 l0.8 0.8" fill="none" stroke="#a6a8ab" stroke-width="1.1"/>
<text x="835.74" y="513.6" font-size="12.1" fill="#c6c7c9">퀀타이즈</text>
<path d="M888 523.3 h8 l-4 4.6 z" fill="#9a9c9f"/>
<text x="914.17" y="513.6" font-size="12.1" fill="#c6c7c9">타임베이스</text>
<text x="925.68" y="529.6" font-size="12.3" font-weight="bold" fill="#f4f4f5">마디</text>
<path d="M972 523.3 h8 l-4 4.6 z" fill="#9a9c9f"/>
<text x="1015.87" y="513.6" font-size="12.1" fill="#c6c7c9">스냅</text>
<text x="999.37" y="529.6" font-size="12.3" font-weight="bold" fill="#f4f4f5">퀀타이즈</text>
<path d="M1059 523.3 h8 l-4 4.6 z" fill="#9a9c9f"/>
<path d="M1074 501 h31 q4 0 4 4 v24 q0 4 -4 4 h-31z" fill="#3580d6"/>
<line x1="1085.4" y1="505.6" x2="1085.4" y2="526.6" stroke="#1d2f55" stroke-width="2.6"/>
<line x1="1085.4" y1="505.6" x2="1085.4" y2="526.6" stroke="#fff" stroke-width="1.5"/>
<rect x="1086.4" y="513.4" width="14" height="5.6" rx="1.2" fill="#fff" stroke="#1d2f55" stroke-width="0.6"/>
<rect x="1088.8" y="515.2" width="8.2" height="2" fill="#173a86"/>
<rect x="1121" y="501" width="70" height="32" fill="#202224" rx="4"/>
<path d="M1125 501 H1156 V533 H1125 q-4 0 -4 -4 V505 q0 -4 4 -4z" fill="#3580d6"/>
<path d="M1128.6 513 h9.6 v-4 l7 7 l-7 7 v-4 h-9.6z" fill="#fff" stroke="#1d1f21" stroke-width="0.7"/>
<line x1="1145.8" y1="505.8" x2="1145.8" y2="526.4" stroke="#1d1f21" stroke-width="2.8"/>
<line x1="1145.8" y1="505.8" x2="1145.8" y2="526.4" stroke="#fff" stroke-width="1.7"/>
<path d="M1154.6 524.6 v6.2 h-6.4z" fill="#2a5fa6"/>
<line x1="1164.6" y1="516.8" x2="1184" y2="516.8" stroke="#d6d7d8" stroke-width="1.9"/>
<path d="M1166 507.6 h7.2 l-3.6 4.4z" fill="#c8c9ca"/>
<path d="M1175.8 526.6 h7.2 l-3.6 -4.4z" fill="#c8c9ca"/>
<rect x="1203" y="501" width="34" height="32" fill="#202224" rx="4"/>
<rect x="1212" y="509" width="16" height="16" rx="1.4" fill="none" stroke="#c8c9ca" stroke-width="1.2"/>
<path d="M1216.8 514.2 l3.2 -3.4 l3.2 3.4z M1216.8 519.8 l3.2 3.4 l3.2 -3.4z M1217.2 513.8 l-3.4 3.2 l3.4 3.2z M1222.8 513.8 l3.4 3.2 l-3.4 3.2z" fill="#c8c9ca"/>
<path d="M1745.6 512.6 l8.6 -8.6 M1749.4 503.6 h5.2 v5.2" fill="none" stroke="#d0d1d2" stroke-width="1.5"/>
<path d="M1769.2 502.6 l9.6 9.6 M1778.8 502.6 l-9.6 9.6" fill="none" stroke="#e2e3e4" stroke-width="1.7"/>
<path d="M312 541 h15 l-15 14z" fill="#6d7075"/>
<rect x="9" y="550" width="17.2" height="1.7" fill="#b9babb"/>
<rect x="9" y="553.05" width="17.2" height="1.7" fill="#b9babb"/>
<rect x="9" y="556.1" width="17.2" height="1.7" fill="#b9babb"/>
<rect x="9" y="559.15" width="17.2" height="1.7" fill="#b9babb"/>
<path d="M207.5 553.9 h7 l-3.5 4.2 z" fill="#9a9c9f"/>
<rect x="289" y="549.6" width="15.6" height="2.4" fill="#d2d3d4"/>
<rect x="289" y="554.4" width="3.4" height="2.4" fill="#d2d3d4"/>
<rect x="294.4" y="554.4" width="10.2" height="2.4" fill="#d2d3d4"/>
<rect x="289" y="559.2" width="15.6" height="2.4" fill="#d2d3d4"/>
<rect x="342.5" y="816" width="943.9" height="6" fill="#232528"/>
<rect x="342.5" y="800" width="943.9" height="8" fill="#232528"/>
<rect x="342.5" y="784" width="943.9" height="8" fill="#232528"/>
<rect x="342.5" y="775.5" width="943.9" height="1" fill="#3a3d41"/>
<rect x="342.5" y="760" width="943.9" height="8" fill="#232528"/>
<rect x="342.5" y="744" width="943.9" height="8" fill="#232528"/>
<rect x="342.5" y="735.5" width="943.9" height="1" fill="#3a3d41"/>
<rect x="342.5" y="720" width="943.9" height="8" fill="#232528"/>
<rect x="342.5" y="704" width="943.9" height="8" fill="#232528"/>
<rect x="342.5" y="688" width="943.9" height="8" fill="#232528"/>
<rect x="342.5" y="679.5" width="943.9" height="1" fill="#3a3d41"/>
<rect x="342.5" y="664" width="943.9" height="8" fill="#232528"/>
<rect x="342.5" y="648" width="943.9" height="8" fill="#232528"/>
<rect x="342.5" y="639.5" width="943.9" height="1" fill="#3a3d41"/>
<rect x="342.5" y="624" width="943.9" height="8" fill="#232528"/>
<rect x="342.5" y="608" width="943.9" height="8" fill="#232528"/>
<rect x="342.5" y="592" width="943.9" height="8" fill="#232528"/>
<rect x="342.5" y="583.5" width="943.9" height="1" fill="#3a3d41"/>
<rect x="342" y="840" width="944.9" height="58" fill="#222427" stroke="#0e0f10" stroke-width="1"/>
<rect x="372.5" y="572.4" width="1" height="249.6" fill="#35373b"/>
<rect x="372.5" y="840" width="1" height="58" fill="#35373b"/>
<rect x="403" y="572.4" width="1" height="249.6" fill="#35373b"/>
<rect x="403" y="840" width="1" height="58" fill="#35373b"/>
<rect x="433.5" y="572.4" width="1" height="249.6" fill="#43464a"/>
<rect x="433.5" y="840" width="1" height="58" fill="#43464a"/>
<rect x="464" y="572.4" width="1" height="249.6" fill="#35373b"/>
<rect x="464" y="840" width="1" height="58" fill="#35373b"/>
<rect x="494.5" y="572.4" width="1" height="249.6" fill="#35373b"/>
<rect x="494.5" y="840" width="1" height="58" fill="#35373b"/>
<rect x="525" y="572.4" width="1" height="249.6" fill="#35373b"/>
<rect x="525" y="840" width="1" height="58" fill="#35373b"/>
<rect x="555.5" y="572.4" width="1" height="249.6" fill="#43464a"/>
<rect x="555.5" y="840" width="1" height="58" fill="#43464a"/>
<rect x="586" y="572.4" width="1" height="249.6" fill="#35373b"/>
<rect x="586" y="840" width="1" height="58" fill="#35373b"/>
<rect x="616.5" y="572.4" width="1" height="249.6" fill="#35373b"/>
<rect x="616.5" y="840" width="1" height="58" fill="#35373b"/>
<rect x="647" y="572.4" width="1" height="249.6" fill="#35373b"/>
<rect x="647" y="840" width="1" height="58" fill="#35373b"/>
<rect x="677.5" y="572.4" width="1" height="249.6" fill="#43464a"/>
<rect x="677.5" y="840" width="1" height="58" fill="#43464a"/>
<rect x="708" y="572.4" width="1" height="249.6" fill="#35373b"/>
<rect x="708" y="840" width="1" height="58" fill="#35373b"/>
<rect x="738.5" y="572.4" width="1" height="249.6" fill="#35373b"/>
<rect x="738.5" y="840" width="1" height="58" fill="#35373b"/>
<rect x="768.5" y="572.4" width="1" height="249.6" fill="#35373b"/>
<rect x="768.5" y="840" width="1" height="58" fill="#35373b"/>
<rect x="799" y="572.4" width="1" height="249.6" fill="#55585c"/>
<rect x="799" y="840" width="1" height="58" fill="#55585c"/>
<rect x="829.5" y="572.4" width="1" height="249.6" fill="#35373b"/>
<rect x="829.5" y="840" width="1" height="58" fill="#35373b"/>
<rect x="860" y="572.4" width="1" height="249.6" fill="#35373b"/>
<rect x="860" y="840" width="1" height="58" fill="#35373b"/>
<rect x="890.5" y="572.4" width="1" height="249.6" fill="#35373b"/>
<rect x="890.5" y="840" width="1" height="58" fill="#35373b"/>
<rect x="921" y="572.4" width="1" height="249.6" fill="#43464a"/>
<rect x="921" y="840" width="1" height="58" fill="#43464a"/>
<rect x="951.5" y="572.4" width="1" height="249.6" fill="#35373b"/>
<rect x="951.5" y="840" width="1" height="58" fill="#35373b"/>
<rect x="982" y="572.4" width="1" height="249.6" fill="#35373b"/>
<rect x="982" y="840" width="1" height="58" fill="#35373b"/>
<rect x="1012.5" y="572.4" width="1" height="249.6" fill="#35373b"/>
<rect x="1012.5" y="840" width="1" height="58" fill="#35373b"/>
<rect x="1043" y="572.4" width="1" height="249.6" fill="#43464a"/>
<rect x="1043" y="840" width="1" height="58" fill="#43464a"/>
<rect x="1073.5" y="572.4" width="1" height="249.6" fill="#35373b"/>
<rect x="1073.5" y="840" width="1" height="58" fill="#35373b"/>
<rect x="1104" y="572.4" width="1" height="249.6" fill="#35373b"/>
<rect x="1104" y="840" width="1" height="58" fill="#35373b"/>
<rect x="1134.5" y="572.4" width="1" height="249.6" fill="#35373b"/>
<rect x="1134.5" y="840" width="1" height="58" fill="#35373b"/>
<rect x="1165" y="572.4" width="1" height="249.6" fill="#43464a"/>
<rect x="1165" y="840" width="1" height="58" fill="#43464a"/>
<rect x="1195.5" y="572.4" width="1" height="249.6" fill="#35373b"/>
<rect x="1195.5" y="840" width="1" height="58" fill="#35373b"/>
<rect x="1226" y="572.4" width="1" height="249.6" fill="#35373b"/>
<rect x="1226" y="840" width="1" height="58" fill="#35373b"/>
<rect x="1256.5" y="572.4" width="1" height="249.6" fill="#35373b"/>
<rect x="1256.5" y="840" width="1" height="58" fill="#35373b"/>
<rect x="1286.5" y="572.4" width="1" height="249.6" fill="#34363a"/>
<rect x="1286.5" y="840" width="1" height="58" fill="#34363a"/>
<rect x="1317" y="572.4" width="1" height="249.6" fill="#282a2d"/>
<rect x="1317" y="840" width="1" height="58" fill="#282a2d"/>
<rect x="1347.5" y="572.4" width="1" height="249.6" fill="#282a2d"/>
<rect x="1347.5" y="840" width="1" height="58" fill="#282a2d"/>
<rect x="1378" y="572.4" width="1" height="249.6" fill="#282a2d"/>
<rect x="1378" y="840" width="1" height="58" fill="#282a2d"/>
<rect x="1408.5" y="572.4" width="1" height="249.6" fill="#2e3034"/>
<rect x="1408.5" y="840" width="1" height="58" fill="#2e3034"/>
<rect x="1439" y="572.4" width="1" height="249.6" fill="#282a2d"/>
<rect x="1439" y="840" width="1" height="58" fill="#282a2d"/>
<rect x="1469.5" y="572.4" width="1" height="249.6" fill="#282a2d"/>
<rect x="1469.5" y="840" width="1" height="58" fill="#282a2d"/>
<rect x="1500" y="572.4" width="1" height="249.6" fill="#282a2d"/>
<rect x="1500" y="840" width="1" height="58" fill="#282a2d"/>
<rect x="1530.5" y="572.4" width="1" height="249.6" fill="#2e3034"/>
<rect x="1530.5" y="840" width="1" height="58" fill="#2e3034"/>
<rect x="1561" y="572.4" width="1" height="249.6" fill="#282a2d"/>
<rect x="1561" y="840" width="1" height="58" fill="#282a2d"/>
<rect x="1591.5" y="572.4" width="1" height="249.6" fill="#282a2d"/>
<rect x="1591.5" y="840" width="1" height="58" fill="#282a2d"/>
<rect x="1622" y="572.4" width="1" height="249.6" fill="#282a2d"/>
<rect x="1622" y="840" width="1" height="58" fill="#282a2d"/>
<rect x="1652.5" y="572.4" width="1" height="249.6" fill="#2e3034"/>
<rect x="1652.5" y="840" width="1" height="58" fill="#2e3034"/>
<rect x="1683" y="572.4" width="1" height="249.6" fill="#282a2d"/>
<rect x="1683" y="840" width="1" height="58" fill="#282a2d"/>
<rect x="1713.5" y="572.4" width="1" height="249.6" fill="#282a2d"/>
<rect x="1713.5" y="840" width="1" height="58" fill="#282a2d"/>
<rect x="1744" y="572.4" width="1" height="249.6" fill="#282a2d"/>
<rect x="1744" y="840" width="1" height="58" fill="#282a2d"/>
<rect x="341.5" y="572.4" width="1.2" height="249.6" fill="#0e0f10"/>
<rect x="1286.4" y="572.4" width="1.2" height="249.6" fill="#0e0f10"/>
<rect x="341.5" y="821" width="945.9" height="1.2" fill="#0e0f10"/>
<rect x="311.7" y="563" width="1" height="9" fill="#ecedee"/>
<rect x="342.17" y="570" width="1" height="2.2" fill="#d0d1d2"/>
<rect x="372.64" y="570" width="1" height="2.2" fill="#d0d1d2"/>
<rect x="403.11" y="570" width="1" height="2.2" fill="#d0d1d2"/>
<rect x="433.58" y="568" width="1" height="4" fill="#e0e1e2"/>
<rect x="464.05" y="570" width="1" height="2.2" fill="#d0d1d2"/>
<rect x="494.52" y="570" width="1" height="2.2" fill="#d0d1d2"/>
<rect x="524.99" y="570" width="1" height="2.2" fill="#d0d1d2"/>
<rect x="555.46" y="568" width="1" height="4" fill="#e0e1e2"/>
<rect x="585.93" y="570" width="1" height="2.2" fill="#d0d1d2"/>
<rect x="616.4" y="570" width="1" height="2.2" fill="#d0d1d2"/>
<rect x="646.87" y="570" width="1" height="2.2" fill="#d0d1d2"/>
<rect x="677.34" y="568" width="1" height="4" fill="#e0e1e2"/>
<rect x="707.81" y="570" width="1" height="2.2" fill="#d0d1d2"/>
<rect x="738.28" y="570" width="1" height="2.2" fill="#d0d1d2"/>
<rect x="768.75" y="570" width="1" height="2.2" fill="#d0d1d2"/>
<rect x="799.22" y="563" width="1" height="9" fill="#ecedee"/>
<rect x="829.69" y="570" width="1" height="2.2" fill="#d0d1d2"/>
<rect x="860.16" y="570" width="1" height="2.2" fill="#d0d1d2"/>
<rect x="890.63" y="570" width="1" height="2.2" fill="#d0d1d2"/>
<rect x="921.1" y="568" width="1" height="4" fill="#e0e1e2"/>
<rect x="951.57" y="570" width="1" height="2.2" fill="#d0d1d2"/>
<rect x="982.04" y="570" width="1" height="2.2" fill="#d0d1d2"/>
<rect x="1012.51" y="570" width="1" height="2.2" fill="#d0d1d2"/>
<rect x="1042.98" y="568" width="1" height="4" fill="#e0e1e2"/>
<rect x="1073.45" y="570" width="1" height="2.2" fill="#d0d1d2"/>
<rect x="1103.92" y="570" width="1" height="2.2" fill="#d0d1d2"/>
<rect x="1134.39" y="570" width="1" height="2.2" fill="#d0d1d2"/>
<rect x="1164.86" y="568" width="1" height="4" fill="#e0e1e2"/>
<rect x="1195.33" y="570" width="1" height="2.2" fill="#d0d1d2"/>
<rect x="1225.8" y="570" width="1" height="2.2" fill="#d0d1d2"/>
<rect x="1256.27" y="570" width="1" height="2.2" fill="#d0d1d2"/>
<rect x="1286.74" y="563" width="1" height="9" fill="#ecedee"/>
<rect x="1317.21" y="570" width="1" height="2.2" fill="#d0d1d2"/>
<rect x="1347.68" y="570" width="1" height="2.2" fill="#d0d1d2"/>
<rect x="1378.15" y="570" width="1" height="2.2" fill="#d0d1d2"/>
<rect x="1408.62" y="568" width="1" height="4" fill="#e0e1e2"/>
<rect x="1439.09" y="570" width="1" height="2.2" fill="#d0d1d2"/>
<rect x="1469.56" y="570" width="1" height="2.2" fill="#d0d1d2"/>
<rect x="1500.03" y="570" width="1" height="2.2" fill="#d0d1d2"/>
<rect x="1530.5" y="568" width="1" height="4" fill="#e0e1e2"/>
<rect x="1560.97" y="570" width="1" height="2.2" fill="#d0d1d2"/>
<rect x="1591.44" y="570" width="1" height="2.2" fill="#d0d1d2"/>
<rect x="1621.91" y="570" width="1" height="2.2" fill="#d0d1d2"/>
<rect x="1652.38" y="568" width="1" height="4" fill="#e0e1e2"/>
<rect x="1682.85" y="570" width="1" height="2.2" fill="#d0d1d2"/>
<rect x="1713.32" y="570" width="1" height="2.2" fill="#d0d1d2"/>
<rect x="1743.79" y="570" width="1" height="2.2" fill="#d0d1d2"/>
<rect x="342.47" y="640.3" width="30.17" height="7.4" fill="#242cc0" stroke="#4f56f2" stroke-width="0.9"/>
<rect x="360.961" y="641" width="10.9786" height="6" fill="#2b2e80"/>
<rect x="372.94" y="656.3" width="30.17" height="7.4" fill="#242cc0" stroke="#4f56f2" stroke-width="0.9"/>
<rect x="396.916" y="657" width="5.494" height="6" fill="#2b2e80"/>
<rect x="403.41" y="664.3" width="30.17" height="7.4" fill="#242cc0" stroke="#4f56f2" stroke-width="0.9"/>
<rect x="427.386" y="665" width="5.494" height="6" fill="#2b2e80"/>
<rect x="433.88" y="672.3" width="30.17" height="7.4" fill="#242cc0" stroke="#4f56f2" stroke-width="0.9"/>
<rect x="457.856" y="673" width="5.494" height="6" fill="#2b2e80"/>
<rect x="433.88" y="680.3" width="30.17" height="7.4" fill="#242cc0" stroke="#4f56f2" stroke-width="0.9"/>
<rect x="457.856" y="681" width="5.494" height="6" fill="#2b2e80"/>
<rect x="433.88" y="696.3" width="91.11" height="7.4" fill="#242cc0" stroke="#4f56f2" stroke-width="0.9"/>
<rect x="506.608" y="697" width="17.682" height="6" fill="#2b2e80"/>
<rect x="525.29" y="696.3" width="60.64" height="7.4" fill="#242cc0" stroke="#4f56f2" stroke-width="0.9"/>
<rect x="573.642" y="697" width="11.588" height="6" fill="#2b2e80"/>
<rect x="525.29" y="704.3" width="30.17" height="7.4" fill="#242cc0" stroke="#4f56f2" stroke-width="0.9"/>
<rect x="549.266" y="705" width="5.494" height="6" fill="#2b2e80"/>
<rect x="555.76" y="664.3" width="91.11" height="7.4" fill="#242cc0" stroke="#4f56f2" stroke-width="0.9"/>
<rect x="628.488" y="665" width="17.682" height="6" fill="#2b2e80"/>
<rect x="647.17" y="728.3" width="91.11" height="7.4" fill="#242cc0" stroke="#4f56f2" stroke-width="0.9"/>
<rect x="719.898" y="729" width="17.682" height="6" fill="#2b2e80"/>
<rect x="769.05" y="768.3" width="30.17" height="7.4" fill="#242cc0" stroke="#4f56f2" stroke-width="0.9"/>
<rect x="793.026" y="769" width="5.494" height="6" fill="#2b2e80"/>
<rect x="494.82" y="800.3" width="30.17" height="7.4" fill="#242cc0" stroke="#4f56f2" stroke-width="0.9"/>
<rect x="518.796" y="801" width="5.494" height="6" fill="#2b2e80"/>
<rect x="586.23" y="800.3" width="30.17" height="7.4" fill="#242cc0" stroke="#4f56f2" stroke-width="0.9"/>
<rect x="610.206" y="801" width="5.494" height="6" fill="#2b2e80"/>
<rect x="677.64" y="800.3" width="30.17" height="7.4" fill="#242cc0" stroke="#4f56f2" stroke-width="0.9"/>
<rect x="701.616" y="801" width="5.494" height="6" fill="#2b2e80"/>
<defs><linearGradient id="wk" x1="0" x2="1" y1="0" y2="0"><stop offset="0" stop-color="#3a3a3a"/><stop offset="0.04" stop-color="#9a9a9a"/><stop offset="0.12" stop-color="#e4e4e5"/><stop offset="0.22" stop-color="#f2f2f3"/><stop offset="0.965" stop-color="#f2f2f3"/><stop offset="0.985" stop-color="#c4c4c5"/><stop offset="1" stop-color="#a0a0a1"/></linearGradient><linearGradient id="bk" x1="0" x2="1" y1="0" y2="0"><stop offset="0" stop-color="#1c1e1f"/><stop offset="0.6" stop-color="#2a2d2e"/><stop offset="0.86" stop-color="#4c5052"/><stop offset="0.9" stop-color="#1a1c1d"/><stop offset="1" stop-color="#1a1c1d"/></linearGradient></defs>
<rect x="222.5" y="572.4" width="88.5" height="249.6" fill="url(#wk)"/>
<rect x="223.5" y="817.3" width="87.5" height="1" fill="#8e8f90"/>
<rect x="223.5" y="803.3" width="87.5" height="1" fill="#8e8f90"/>
<rect x="223.5" y="789.3" width="87.5" height="1" fill="#8e8f90"/>
<rect x="222.5" y="816" width="56.4" height="6" fill="url(#bk)"/>
<rect x="222.5" y="816" width="56.4" height="0.8" fill="#111213"/>
<rect x="222.5" y="800" width="56.4" height="8" fill="url(#bk)"/>
<rect x="222.5" y="800" width="56.4" height="0.8" fill="#111213"/>
<rect x="222.5" y="784" width="56.4" height="8" fill="url(#bk)"/>
<rect x="222.5" y="784" width="56.4" height="0.8" fill="#111213"/>
<rect x="223.5" y="775.3" width="87.5" height="1" fill="#8e8f90"/>
<rect x="223.5" y="761.97" width="87.5" height="1" fill="#8e8f90"/>
<rect x="223.5" y="748.63" width="87.5" height="1" fill="#8e8f90"/>
<rect x="223.5" y="735.3" width="87.5" height="1" fill="#8e8f90"/>
<rect x="223.5" y="721.3" width="87.5" height="1" fill="#8e8f90"/>
<rect x="223.5" y="707.3" width="87.5" height="1" fill="#8e8f90"/>
<rect x="223.5" y="693.3" width="87.5" height="1" fill="#8e8f90"/>
<rect x="222.5" y="760" width="56.4" height="8" fill="url(#bk)"/>
<rect x="222.5" y="760" width="56.4" height="0.8" fill="#111213"/>
<rect x="222.5" y="744" width="56.4" height="8" fill="url(#bk)"/>
<rect x="222.5" y="744" width="56.4" height="0.8" fill="#111213"/>
<rect x="222.5" y="720" width="56.4" height="8" fill="url(#bk)"/>
<rect x="222.5" y="720" width="56.4" height="0.8" fill="#111213"/>
<rect x="222.5" y="704" width="56.4" height="8" fill="url(#bk)"/>
<rect x="222.5" y="704" width="56.4" height="0.8" fill="#111213"/>
<rect x="222.5" y="688" width="56.4" height="8" fill="url(#bk)"/>
<rect x="222.5" y="688" width="56.4" height="0.8" fill="#111213"/>
<rect x="223.5" y="679.3" width="87.5" height="1" fill="#8e8f90"/>
<rect x="223.5" y="665.97" width="87.5" height="1" fill="#8e8f90"/>
<rect x="223.5" y="652.63" width="87.5" height="1" fill="#8e8f90"/>
<rect x="223.5" y="639.3" width="87.5" height="1" fill="#8e8f90"/>
<rect x="223.5" y="625.3" width="87.5" height="1" fill="#8e8f90"/>
<rect x="223.5" y="611.3" width="87.5" height="1" fill="#8e8f90"/>
<rect x="223.5" y="597.3" width="87.5" height="1" fill="#8e8f90"/>
<rect x="222.5" y="664" width="56.4" height="8" fill="url(#bk)"/>
<rect x="222.5" y="664" width="56.4" height="0.8" fill="#111213"/>
<rect x="222.5" y="648" width="56.4" height="8" fill="url(#bk)"/>
<rect x="222.5" y="648" width="56.4" height="0.8" fill="#111213"/>
<rect x="222.5" y="624" width="56.4" height="8" fill="url(#bk)"/>
<rect x="222.5" y="624" width="56.4" height="0.8" fill="#111213"/>
<rect x="222.5" y="608" width="56.4" height="8" fill="url(#bk)"/>
<rect x="222.5" y="608" width="56.4" height="0.8" fill="#111213"/>
<rect x="222.5" y="592" width="56.4" height="8" fill="url(#bk)"/>
<rect x="222.5" y="592" width="56.4" height="0.8" fill="#111213"/>
<rect x="223.5" y="583.3" width="87.5" height="1" fill="#8e8f90"/>
<rect x="222.5" y="572.4" width="56.4" height="3.6" fill="url(#bk)"/>
<rect x="222" y="572.4" width="1" height="249.6" fill="#101112"/>
<path d="M1775.2 582.2 l4.6 -5 l4.6 5z" fill="#9a9c9f"/>
<path d="M1775.2 812.2 l4.6 5 l4.6 -5z" fill="#9a9c9f"/>
<rect x="1777.2" y="661.6" width="4.6" height="52" fill="#8c8e91" rx="2.3"/>
<rect x="313" y="823.4" width="16" height="15" fill="#2f3135"/>
<rect x="332" y="823.4" width="59" height="15" fill="#2f3135"/>
<text x="342" y="834.8" font-size="10.6" fill="#c4c5c7">벨로시티</text>
<rect x="392" y="823.4" width="83" height="15" fill="#3375c8"/>
<text x="403.06" y="834.8" font-size="10.6" fill="#ffffff">노트 컨트롤러</text>
<rect x="476" y="823.4" width="102" height="15" fill="#2f3135"/>
<text x="486.8" y="834.8" font-size="10.6" fill="#c4c5c7">사운드 바리에이션</text>
<rect x="579" y="823.4" width="64" height="15" fill="#2f3135"/>
<text x="590.31" y="834.8" font-size="10.6" fill="#c4c5c7">음악 기호</text>
<rect x="644" y="823.4" width="40" height="15" fill="#2f3135"/>
<text x="654.25" y="834.8" font-size="10.6" fill="#c4c5c7">가사</text>
<rect x="685" y="823.4" width="72" height="15" fill="#2f3135"/>
<rect x="758" y="823.4" width="71" height="15" fill="#2f3135"/>
<rect x="830" y="823.4" width="74" height="15" fill="#2f3135"/>
<rect x="316.6" y="832.6" width="1.8" height="1.8" fill="#d0d1d2"/>
<rect x="320.2" y="832.6" width="1.8" height="1.8" fill="#d0d1d2"/>
<rect x="323.8" y="832.6" width="1.8" height="1.8" fill="#d0d1d2"/>
<path d="M1776.6 828.2 l5.6 5.6 M1782.2 828.2 l-5.6 5.6" fill="none" stroke="#d0d1d2" stroke-width="1.5"/>
<rect x="222.5" y="840" width="88.5" height="58" fill="#393c42" stroke="#17191b" stroke-width="1"/>
<text x="256.42" y="859" font-size="11.5" fill="#dfe0e1">타입</text>
<rect x="232" y="870" width="70" height="18" rx="2.4" fill="#2b2d31" stroke="#222427" stroke-width="1"/>
<text x="245.13" y="884" font-size="11.5" fill="#e2e3e4">프레셔</text>
<path d="M290.3 877.4 h7.4 l-3.7 4.4 z" fill="#a6a8ab"/>
<path d="M226.6 911.4 l4.4 -5.2 l2.6 2.2 l3 -3.6 l3 1.2" fill="none" stroke="#e2e3e4" stroke-width="1.3"/>
<path d="M250 907.4 h8 M254 903.4 v8" fill="none" stroke="#e2e3e4" stroke-width="1.6"/>
<path d="M271 907.4 h8" fill="none" stroke="#e2e3e4" stroke-width="1.6"/>
<path d="M324.6 902.6 v9.6 l-6.4 -4.8z" fill="#8c8e91"/>
<rect x="336" y="905" width="25" height="5" fill="#85888b" rx="2.5"/>
<path d="M1647.4 902.6 v9.6 l6.4 -4.8z" fill="#8c8e91"/>
<line x1="1672" y1="907.4" x2="1756" y2="907.4" stroke="#9a9c9f" stroke-width="1.2"/>
<circle cx="1671.5" cy="907.4" r="2" fill="#9a9c9f"/>
<circle cx="1757" cy="907.4" r="3.6" fill="#9a9c9f"/>
<rect x="1701.4" y="902.6" width="3.2" height="9.6" fill="#9a9c9f" rx="1.4"/>
<rect x="1777.6" y="901.2" width="7.4" height="2.2" fill="#8c8e91"/>
<rect x="1777.6" y="904.6" width="7.4" height="2.2" fill="#8c8e91"/>
<rect x="1772" y="908.6" width="4" height="1.6" fill="#8c8e91"/>
<rect x="1772" y="911.4" width="4" height="1.6" fill="#8c8e91"/>
<path d="M8.6 580.6 v8.4 h10.8 v-8.4 h-1.4 v5 h-1.8 v-5 h-1.2 v5 h-1.8 v-5 h-1.2 v5 h-1.8 v-5z" fill="#e2e3e4"/>
<text x="27.4" y="589.2" font-size="12" fill="#e0e1e2">악기</text>
<rect x="156.4" y="573" width="65" height="22" fill="#34373c"/>
<rect x="188" y="573" width="1" height="22" fill="#393c42"/>
<text x="7.6" y="616.2" font-size="12" fill="#e0e1e2">오디션 노트</text>
<rect x="200.5" y="602.5" width="18" height="17.6" rx="2.6" fill="#2b2d31" stroke="#232528" stroke-width="1"/>
<path d="M205 611.4 l3.2 3.4 l6.4 -7.6" fill="none" stroke="#ffffff" stroke-width="1.9"/>
<text x="7.6" y="643.2" font-size="12" fill="#e0e1e2">오버랩 없음</text>
<rect x="200.5" y="629.5" width="18" height="17.6" rx="2.6" fill="#2b2d31" stroke="#232528" stroke-width="1"/>
<text x="7.6" y="670.2" font-size="12" fill="#e0e1e2">기본 벨로시티</text>
<rect x="179.5" y="656.5" width="39" height="17.6" rx="2.6" fill="#2b2d31" stroke="#232528" stroke-width="1"/>
<text x="7.6" y="697.2" font-size="12" fill="#e0e1e2">길이</text>
<rect x="200.5" y="683.9" width="18" height="17.6" rx="2.6" fill="#2f6fc4" stroke="#2a62ae" stroke-width="1"/>
<rect x="5.5" y="710.5" width="43" height="17.6" rx="2.6" fill="#2b2d31" stroke="#232528" stroke-width="1"/>
<path d="M37.3 717.4 h7.4 l-3.7 4.4 z" fill="#a6a8ab"/>
<rect x="57.5" y="710.5" width="136.6" height="17.6" rx="2.6" fill="#2b2d31" stroke="#232528" stroke-width="1"/>
<text x="93.32" y="723.6" font-size="11.6" fill="#dfe0e1">스트레이트</text>
<path d="M182.9 717.4 h7.4 l-3.7 4.4 z" fill="#a6a8ab"/>
<rect x="200.5" y="710.5" width="18" height="17.6" rx="2.6" fill="#42464e" stroke="#33363b" stroke-width="1"/>
<rect x="208.4" y="718.4" width="2.4" height="2.4" fill="#e2e3e4"/>
<text x="7.6" y="751.2" font-size="12" fill="#e0e1e2">스케일</text>
<rect x="5.5" y="762.5" width="43" height="17.6" rx="2.6" fill="#2b2d31" stroke="#232528" stroke-width="1"/>
<path d="M37.3 769.4 h7.4 l-3.7 4.4 z" fill="#a6a8ab"/>
<rect x="57.5" y="762.5" width="136.6" height="17.6" rx="2.6" fill="#2b2d31" stroke="#232528" stroke-width="1"/>
<path d="M182.9 769.4 h7.4 l-3.7 4.4 z" fill="#a6a8ab"/>
<rect x="200.5" y="762.5" width="18" height="17.6" rx="2.6" fill="#2b2d31" stroke="#232528" stroke-width="1"/>
<text x="7.6" y="801.6" font-size="12" fill="#e0e1e2">사운드 바리에이션</text>
<rect x="200.5" y="787.9" width="18" height="17.6" rx="2.6" fill="#454951" stroke="#33363b" stroke-width="1"/>
<g transform="translate(207.4,794.6) scale(0.72)">
<path d="M1.6 1.6 L9.2 8.4" fill="none" stroke="#e2e3e4" stroke-width="3.1" stroke-linecap="round"/>
<circle cx="0" cy="0" r="4.5" fill="#e2e3e4"/>
<rect x="-5" y="-1.25" width="5.6" height="2.5" fill="#454951" rx="1"/>
</g>
<text x="7.6" y="841.4" font-size="12" fill="#e0e1e2">선택된 이벤트가 없습니다.</text>
<text x="7.6" y="866.2" font-size="12" fill="#e0e1e2">코드 입력</text>
<rect x="125" y="852.4" width="94" height="18.4" fill="#3f4248" rx="3"/>
<text x="7.6" y="893.2" font-size="12" fill="#e0e1e2">현재코드</text>
<rect x="125" y="879.4" width="94" height="18.4" fill="#3f4248" rx="3"/>
<path d="M0 925 H58 q3 0 3.8 3 L71.5 968 H0z" fill="#393c42"/>
<path d="M1543.2 968 L1553.8 927.6 q0.8 -3 3.8 -3 H1792 V968z" fill="#393c42"/>
<circle cx="92" cy="938" r="6.2" fill="none" stroke="#8c8e91" stroke-width="1.2"/>
<circle cx="88.6" cy="936.4" r="0.9" fill="#8c8e91"/>
<circle cx="89.8" cy="940.6" r="0.9" fill="#8c8e91"/>
<circle cx="92" cy="934.4" r="0.9" fill="#8c8e91"/>
<circle cx="94.2" cy="940.6" r="0.9" fill="#8c8e91"/>
<circle cx="95.4" cy="936.4" r="0.9" fill="#8c8e91"/>
<path d="M79.4 935 l3 3 l-3 3z M102.6 935 l3 3 l-3 3z" fill="#6d7075"/>
<rect x="116" y="932" width="65" height="5" fill="#2b2d31"/>
<rect x="116" y="938.4" width="65" height="5" fill="#2b2d31"/>
<rect x="176.6" y="932" width="4.4" height="5" fill="#34373b"/>
<rect x="176.6" y="938.4" width="4.4" height="5" fill="#34373b"/>
<text x="129.76" y="959.4" font-size="11" fill="#a9abad">퍼포먼스</text>
<circle cx="219.50" cy="945.60" r="1.25" fill="#c0c1c2"/>
<circle cx="218.51" cy="949.94" r="1.25" fill="#c0c1c2"/>
<circle cx="215.73" cy="953.42" r="1.25" fill="#c0c1c2"/>
<circle cx="211.73" cy="955.35" r="1.25" fill="#c0c1c2"/>
<circle cx="207.27" cy="955.35" r="1.25" fill="#c0c1c2"/>
<circle cx="203.27" cy="953.42" r="1.25" fill="#c0c1c2"/>
<circle cx="200.49" cy="949.94" r="1.25" fill="#c0c1c2"/>
<circle cx="199.50" cy="945.60" r="1.25" fill="#c0c1c2"/>
<circle cx="200.49" cy="941.26" r="1.25" fill="#c0c1c2"/>
<circle cx="203.27" cy="937.78" r="1.25" fill="#c0c1c2"/>
<circle cx="207.27" cy="935.85" r="1.25" fill="#c0c1c2"/>
<circle cx="211.73" cy="935.85" r="1.25" fill="#c0c1c2"/>
<circle cx="215.73" cy="937.78" r="1.25" fill="#c0c1c2"/>
<circle cx="218.51" cy="941.26" r="1.25" fill="#c0c1c2"/>
<text x="338.4" y="944.2" font-size="12.6" fill="#e8e9ea">일</text>
<text x="302.4" y="959.4" font-size="11" fill="#a9abad">레코딩 최대</text>
<text x="428" y="959.4" font-size="10.6" fill="#a9abad">초</text>
<path d="M443.5 953.3 h7 l-3.5 4.2 z" fill="#8c8e91"/>
<text x="551" y="959.8" font-size="11" fill="#a9abad">마디</text>
<path d="M576.1 953.5 h7 l-3.5 4.2 z" fill="#8c8e91"/>
<path d="M653 938 v12 l-10.6 -6z" fill="#c8c9ca"/>
<path d="M674 938 v12 l-9.6 -6z M682.6 938 v12 l-9.6 -6z" fill="#c8c9ca"/>
<path d="M695.8 938 v12 l9.6 -6z M704.4 938 v12 l9.6 -6z" fill="#c8c9ca"/>
<path d="M722 938 v12 l10.6 -6z" fill="#c8c9ca"/>
<path d="M759.4 938 v12 l-10 -6z" fill="#c8c9ca"/>
<rect x="746.4" y="938" width="1.8" height="12" fill="#c8c9ca"/>
<rect x="780" y="935" width="20" height="20" fill="#2fb0de"/>
<path d="M818.8 934.6 v20.8 l17.6 -10.4z" fill="#c8c9ca"/>
<circle cx="860" cy="945" r="10" fill="#c8c9ca"/>
<path d="M900.6 954 h-5.2 q-8.6 0 -8.6 -9 q0 -9 8.6 -9 h13 q8.6 0 8.6 9 q0 9 -8.6 9 h-1 M900.6 954 q3 -0.4 3 -4 q0 -4.6 -4 -4.6 M907.4 954 q-2.6 -2 0 -5.4" fill="none" stroke="#9a9c9f" stroke-width="1.8" stroke-linecap="round"/>
<path d="M950 936.6 h2.6 v17 h-2.6" fill="none" stroke="#5a5d61" stroke-width="1"/>
<path d="M1080 934.6 a4.6 4.6 0 1 0 6 0" fill="none" stroke="#b4b6b9" stroke-width="1.5" stroke-linecap="round"/>
<line x1="1083" y1="932.6" x2="1083" y2="938" stroke="#b4b6b9" stroke-width="1.5" stroke-linecap="round"/>
<text x="1068.42" y="959.6" font-size="11" fill="#a9abad">동기화</text>
<path d="M1112 936.6 h4 l4 3 h7" fill="none" stroke="#b4b6b9" stroke-width="1.2"/>
<circle cx="1119.2" cy="953.6" r="4.4" fill="none" stroke="#b4b6b9" stroke-width="2" stroke-dasharray="1.7 1.75"/>
<circle cx="1119.2" cy="953.6" r="2.7" fill="none" stroke="#b4b6b9" stroke-width="1.7"/>
<line x1="1139.6" y1="933" x2="1139.6" y2="942" stroke="#b4b6b9" stroke-width="1"/>
<rect x="1145.6" y="934.6" width="7.6" height="5" fill="#b4b6b9"/>
<rect x="1141.6" y="936.8" width="1" height="1" fill="#b4b6b9"/>
<rect x="1143.4" y="936.8" width="1" height="1" fill="#b4b6b9"/>
<line x1="1141" y1="949" x2="1141" y2="958" stroke="#b4b6b9" stroke-width="1.2"/>
<line x1="1151.4" y1="949" x2="1151.4" y2="958" stroke="#b4b6b9" stroke-width="1.2"/>
<rect x="1141" y="952.2" width="10.4" height="2.6" fill="#b4b6b9"/>
<rect x="1137.4" y="953" width="1.2" height="1" fill="#b4b6b9"/>
<rect x="1153.4" y="953" width="1.2" height="1" fill="#b4b6b9"/>
<circle cx="1173.2" cy="938" r="4.4" fill="#6d7075"/>
<g transform="translate(1189.6,935.6) scale(0.62)">
<path d="M1.6 1.6 L9.2 8.4" fill="none" stroke="#b4b6b9" stroke-width="3.1" stroke-linecap="round"/>
<circle cx="0" cy="0" r="4.5" fill="#b4b6b9"/>
<rect x="-5" y="-1.25" width="5.6" height="2.5" fill="#131416" rx="1"/>
</g>
<path d="M1208.8 942.6 l5.6 -10.4 l5.8 10.4z" fill="#3fc4f2"/>
<line x1="1210.4" y1="934.6" x2="1215.6" y2="940.2" stroke="#131415" stroke-width="2.4"/>
<line x1="1209.8" y1="934" x2="1215.6" y2="940.2" stroke="#3fc4f2" stroke-width="1.2"/>
<text x="1173.36" y="959.6" font-size="11" fill="#a9abad">메트로놈</text>
<text x="1244.48" y="959.6" font-size="11" fill="#a9abad">박자</text>
<text x="1297.54" y="959.6" font-size="11" fill="#a9abad">키</text>
<text x="1327.5" y="959.6" font-size="11" fill="#a9abad">트랜스포즈</text>
<text x="1398.48" y="959.6" font-size="11" fill="#a9abad">템포</text>
<rect x="1446" y="932" width="90" height="4" fill="#2b2d31"/>
<rect x="1446" y="937" width="90" height="4" fill="#2b2d31"/>
<rect x="1514" y="932" width="22" height="9" fill="#232528"/>
<defs><pattern id="st" width="2" height="10" patternUnits="userSpaceOnUse"><rect width="1.1" height="10" fill="#35a6dc"/></pattern><pattern id="sg" width="2" height="10" patternUnits="userSpaceOnUse"><rect width="1.1" height="10" fill="#4a4d52"/></pattern></defs>
<rect x="1446" y="949" width="47" height="10" fill="url(#st)"/>
<rect x="1492.4" y="949" width="1.8" height="10" fill="#5cc4f0"/>
<rect x="1496" y="949" width="17" height="10" fill="url(#sg)"/>
<rect x="1520" y="949.6" width="16.6" height="8.6" fill="#2fb0de" rx="4.3"/>
<circle cx="1532" cy="953.9" r="3" fill="#131416"/>
<rect x="1620" y="924.6" width="55.4" height="43.4" fill="#3580d6"/>
<rect x="1675.4" y="924.6" width="1" height="43.4" fill="#2d3034"/>
<rect x="1731.4" y="924.6" width="1" height="43.4" fill="#2d3034"/>
<text x="1636.19" y="953.4" font-size="12.4" fill="#ffffff">편집</text>
<text x="1692.39" y="953.4" font-size="12.4" fill="#e2e3e4">믹스</text>
<text x="1741.18" y="953.4" font-size="12.4" fill="#e2e3e4">브라우즈</text>
</svg>
<span style="top:-6.86px;font-size:12px;color:#222;letter-spacing:0.36px;left:22px;">Studio One - 2020-07-03</span>
<span style="top:16.84px;font-size:12px;color:#000;left:76px;">Song</span>
<span style="top:16.84px;font-size:12px;color:#000;left:368px;">Studio One</span>
<span style="top:45.67px;font-size:12.2px;color:#e4e5e6;font-weight:bold;left:39px;">Monophone</span>
<span style="top:61.63px;font-size:10.6px;color:#e4e5e6;font-weight:bold;left:-3px;">1 - SampleOne</span>
<span style="top:61.63px;font-size:10.6px;color:#e4e5e6;font-weight:bold;left:147.5px;">1</span>
<span style="top:52.27px;font-size:12.2px;color:#b9babc;font-weight:bold;left:870.4px;">IQ</span>
<span style="top:61.72px;font-size:11.2px;color:#e6e7e8;font-weight:bold;left:935px;transform:translateX(-50%);">1/16</span>
<span style="top:49.90px;font-size:17.6px;color:#d6d7d8;font-weight:bold;left:1377px;transform:translateX(-50%);">?</span>
<span style="top:98.77px;font-size:10.9px;color:#e4e5e6;left:258.2px;">1</span>
<span style="top:98.77px;font-size:10.9px;color:#e4e5e6;left:358.2px;">2</span>
<span style="top:98.77px;font-size:10.9px;color:#e4e5e6;left:458.2px;">3</span>
<span style="top:98.77px;font-size:10.9px;color:#e4e5e6;left:558.2px;">4</span>
<span style="top:98.77px;font-size:10.9px;color:#e4e5e6;left:658.2px;">5</span>
<span style="top:98.77px;font-size:10.9px;color:#e4e5e6;left:758.2px;">6</span>
<span style="top:98.77px;font-size:10.9px;color:#e4e5e6;left:858.2px;">7</span>
<span style="top:98.77px;font-size:10.9px;color:#e4e5e6;left:958.2px;">8</span>
<span style="top:98.77px;font-size:10.9px;color:#e4e5e6;left:1058.2px;">9</span>
<span style="top:98.77px;font-size:10.9px;color:#e4e5e6;left:1158.2px;">10</span>
<span style="top:98.77px;font-size:10.9px;color:#e4e5e6;left:1258.2px;">11</span>
<span style="top:98.77px;font-size:10.9px;color:#e4e5e6;left:1358.2px;">12</span>
<span style="top:98.77px;font-size:10.9px;color:#e4e5e6;left:1458.2px;">13</span>
<span style="top:98.77px;font-size:10.9px;color:#e4e5e6;left:1558.2px;">14</span>
<span style="top:98.77px;font-size:10.9px;color:#e4e5e6;left:1658.2px;">15</span>
<span style="top:98.77px;font-size:10.9px;color:#e4e5e6;left:1758.2px;">16</span>
<span style="top:126.24px;font-size:12px;color:#ffffff;font-weight:bold;left:25.5px;transform:translateX(-50%);">1</span>
<span style="top:127.31px;font-size:10.5px;color:#e9eaeb;left:48.5px;transform:translateX(-50%);">M</span>
<span style="top:127.31px;font-size:10.5px;color:#e9eaeb;left:72.5px;transform:translateX(-50%);">S</span>
<span style="top:186.24px;font-size:12px;color:#ffffff;font-weight:bold;left:25.5px;transform:translateX(-50%);">2</span>
<span style="top:187.31px;font-size:10.5px;color:#e9eaeb;left:48.5px;transform:translateX(-50%);">M</span>
<span style="top:187.31px;font-size:10.5px;color:#e9eaeb;left:72.5px;transform:translateX(-50%);">S</span>
<span style="top:470.94px;font-size:10px;color:#e3e4e5;left:25.5px;transform:translateX(-50%);">M</span>
<span style="top:470.94px;font-size:10px;color:#e3e4e5;left:74.5px;transform:translateX(-50%);">S</span>
<span style="top:511.75px;font-size:11.4px;color:#b9babc;left:796.5px;transform:translateX(-50%);">AQ</span>
<span style="top:520.12px;font-size:11.2px;color:#e6e7e8;font-weight:bold;left:860px;transform:translateX(-50%);">1/16</span>
<span style="top:548.86px;font-size:10.8px;color:#e4e5e6;left:313.2px;">1</span>
<span style="top:549.62px;font-size:9.9px;color:#b4b6b9;left:434.88px;">1.2</span>
<span style="top:549.62px;font-size:9.9px;color:#b4b6b9;left:556.76px;">1.3</span>
<span style="top:549.62px;font-size:9.9px;color:#b4b6b9;left:678.64px;">1.4</span>
<span style="top:548.86px;font-size:10.8px;color:#e4e5e6;left:800.72px;">2</span>
<span style="top:549.62px;font-size:9.9px;color:#b4b6b9;left:922.4px;">2.2</span>
<span style="top:549.62px;font-size:9.9px;color:#b4b6b9;left:1044.28px;">2.3</span>
<span style="top:549.62px;font-size:9.9px;color:#b4b6b9;left:1166.16px;">2.4</span>
<span style="top:548.86px;font-size:10.8px;color:#e4e5e6;left:1288.24px;">3</span>
<span style="top:549.62px;font-size:9.9px;color:#b4b6b9;left:1409.92px;">3.2</span>
<span style="top:549.62px;font-size:9.9px;color:#b4b6b9;left:1531.8px;">3.3</span>
<span style="top:549.62px;font-size:9.9px;color:#b4b6b9;left:1653.68px;">3.4</span>
<span style="top:765.46px;font-size:8.2px;color:#1a1a1a;font-weight:bold;letter-spacing:0.3px;left:293.6px;">C 3</span>
<span style="top:669.46px;font-size:8.2px;color:#1a1a1a;font-weight:bold;letter-spacing:0.3px;left:293.6px;">C 4</span>
<span style="top:573.46px;font-size:8.2px;color:#1a1a1a;font-weight:bold;letter-spacing:0.3px;left:293.6px;">C 5</span>
<span style="top:826.93px;font-size:10px;color:#c4c5c7;left:721px;transform:translateX(-50%);">Modulation</span>
<span style="top:826.93px;font-size:10px;color:#c4c5c7;left:793.5px;transform:translateX(-50%);">Pitch Bend</span>
<span style="top:826.93px;font-size:10px;color:#c4c5c7;left:867px;transform:translateX(-50%);">After Touch</span>
<span style="top:577.80px;font-size:13px;color:#cfd0d2;left:172.5px;transform:translateX(-50%);">M</span>
<span style="top:577.80px;font-size:13px;color:#cfd0d2;left:205.3px;transform:translateX(-50%);">S</span>
<span style="top:658.98px;font-size:11.6px;color:#dfe0e1;left:198.6px;transform:translateX(-50%);">80%</span>
<span style="top:686.70px;font-size:12.4px;color:#fff;font-weight:bold;left:209.6px;transform:translateX(-50%);">Q</span>
<span style="top:712.58px;font-size:11.6px;color:#dfe0e1;left:10px;">1/16</span>
<span style="top:764.58px;font-size:11.6px;color:#dfe0e1;left:21.4px;transform:translateX(-50%);">C</span>
<span style="top:765.92px;font-size:11.2px;color:#dfe0e1;left:120px;transform:translateX(-50%);">Chromatic</span>
<span style="top:949.60px;font-size:10.4px;color:#b4b6b9;left:92px;transform:translateX(-50%);">MIDI</span>
<span style="top:932.96px;font-size:12.8px;color:#e8e9ea;left:234px;">44.1 kHz</span>
<span style="top:948.81px;font-size:11.8px;color:#e8e9ea;left:234px;">0.0 ms</span>
<span style="top:932.96px;font-size:12.8px;color:#e8e9ea;left:302px;">38:19</span>
<span style="top:932.96px;font-size:12.8px;color:#e8e9ea;left:382.6px;">00:00:09.291</span>
<span style="top:929.55px;font-size:19.2px;color:#f2f3f4;font-weight:bold;left:488.4px;">00005.03.03.33</span>
<span style="top:931.58px;font-size:11.6px;color:#4a7fb5;font-weight:bold;left:937px;">L</span>
<span style="top:947.38px;font-size:11.6px;color:#4a7fb5;font-weight:bold;left:936.6px;">R</span>
<span style="top:931.48px;font-size:12.9px;color:#e8e9ea;left:958.6px;">00001.01.01.00</span>
<span style="top:946.28px;font-size:12.9px;color:#e8e9ea;left:958.6px;">00001.01.01.00</span>
<span style="top:932.96px;font-size:12.8px;color:#e8e9ea;left:1254.8px;transform:translateX(-50%);">4 / 4</span>
<span style="top:932.96px;font-size:12.8px;color:#e8e9ea;left:1303px;transform:translateX(-50%);">-</span>
<span style="top:932.96px;font-size:12.8px;color:#e8e9ea;left:1352.6px;transform:translateX(-50%);">0</span>
<span style="top:932.96px;font-size:12.8px;color:#e8e9ea;left:1409px;transform:translateX(-50%);">120.00</span>
<p class="sr">편곡* 파일 편집 트랙 이벤트 오디오 트랜스포트 보기 도움말 컨트롤 퀀타이즈 타임베이스 마디 스냅 어댑티브 디스플레이: 오프 노멀 액션 노트 컬러 파트 벨로시티 노트 컨트롤러 사운드 바리에이션 음악 기호 가사 타입 프레셔 악기 오디션 노트 오버랩 없음 기본 벨로시티 길이 스트레이트 스케일 선택된 이벤트가 없습니다. 코드 입력 현재코드 퍼포먼스 일 레코딩 최대 초 동기화 메트로놈 박자 키 트랜스포즈 템포 믹스 브라우즈</p>
</div>
</body></html>
